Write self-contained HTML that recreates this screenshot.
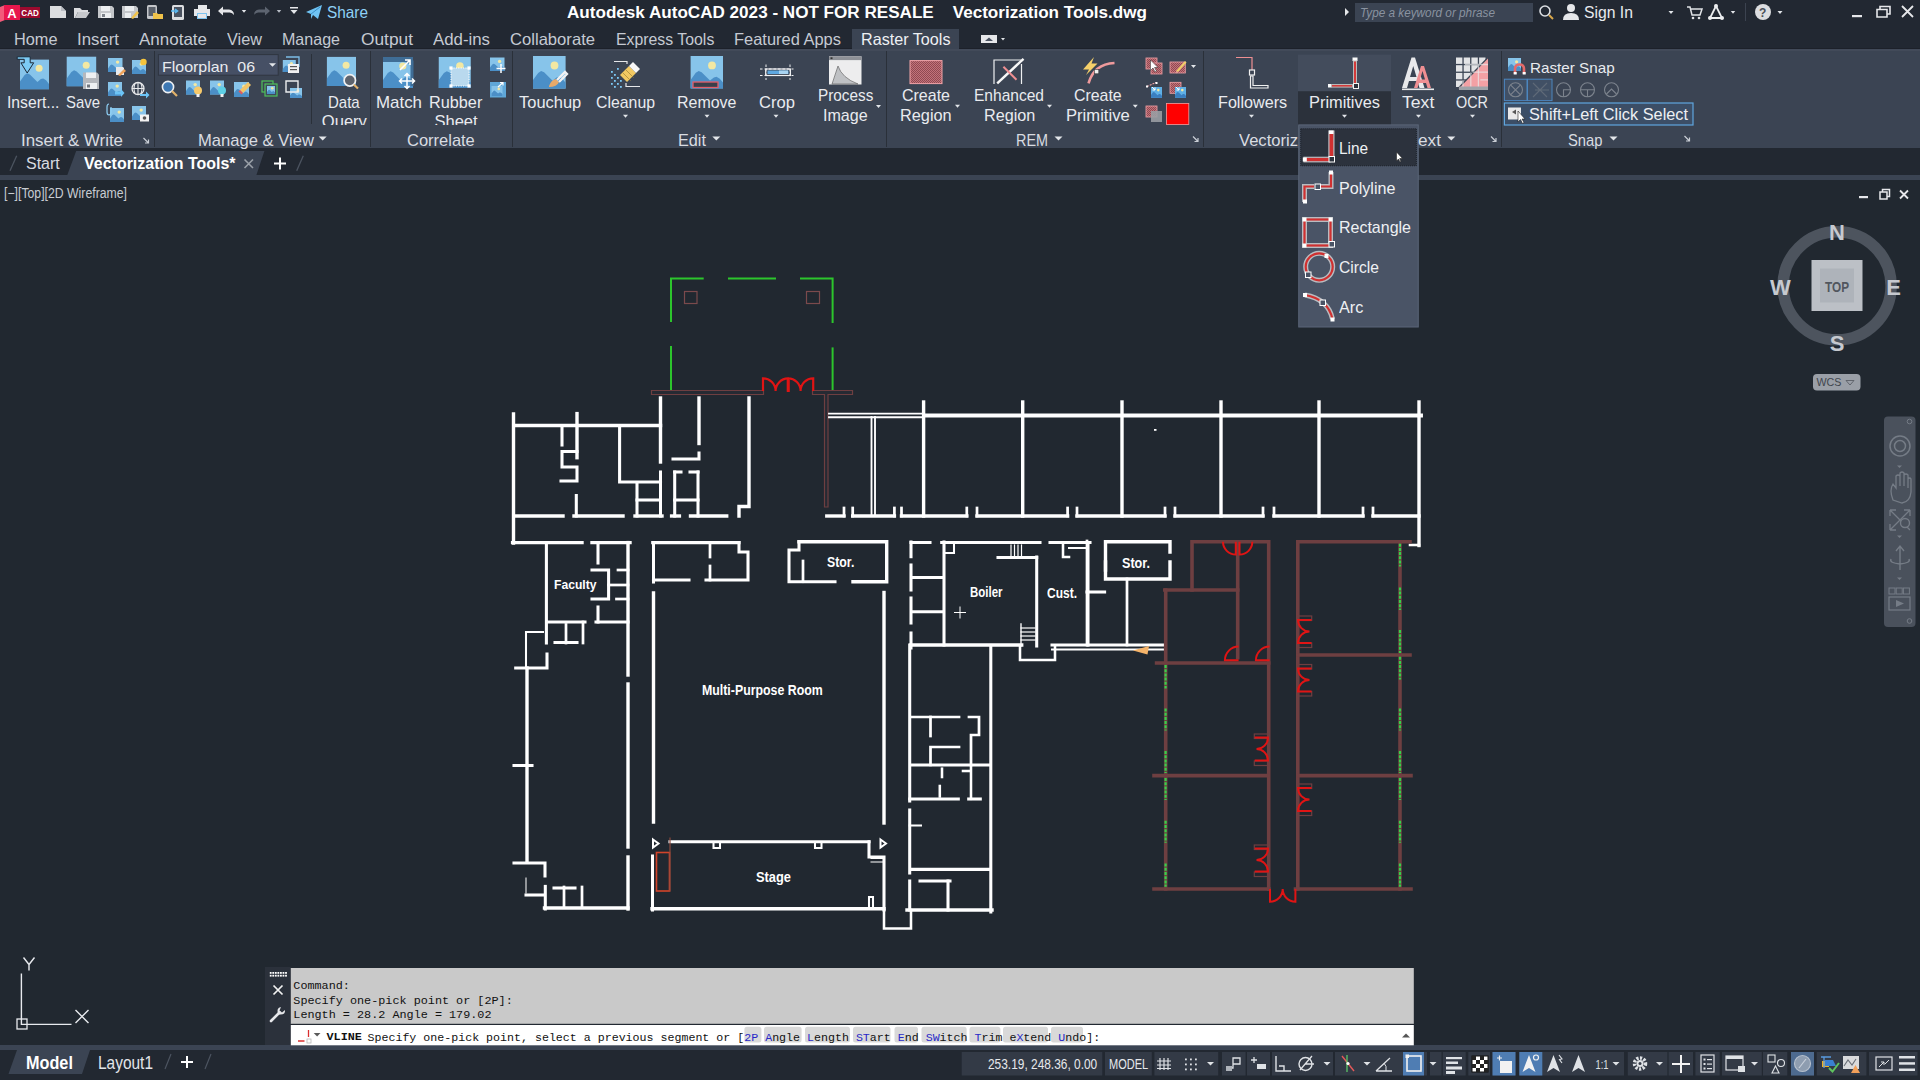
<!DOCTYPE html>
<html><head><meta charset="utf-8"><style>
html,body{margin:0;padding:0;width:1920px;height:1080px;overflow:hidden;background:#212830;}
body>div,body>svg{position:absolute;}
</style></head><body>
<div style="left:0px;top:0px;width:1920px;height:49px;background:#222832;"></div>
<div style="left:0px;top:49px;width:1920px;height:99px;background:#3b4453;"></div>
<div style="left:0px;top:47.5px;width:1920px;height:1.5px;background:#1d212a;"></div>
<div style="left:0px;top:49px;width:1920px;height:2px;background:#424a59;"></div>
<div style="left:0px;top:148px;width:1920px;height:27px;background:#222831;"></div>
<div style="left:0px;top:175px;width:1920px;height:5px;background:#3b4453;"></div>
<div style="left:0px;top:180px;width:1920px;height:866px;background:#212830;"></div>
<div style="left:0px;top:1045px;width:1920px;height:5px;background:#3b4453;"></div>
<div style="left:0px;top:1050px;width:1920px;height:30px;background:#222831;"></div>
<svg style="left:0;top:0" width="1920" height="180" viewBox="0 0 1920 180"><polygon points="0,7 5,5 5,20 0,22" fill="#f25a7a"/><rect x="4" y="5" width="16" height="15" fill="#e8174d" /><text x="7.2" y="17.5" font-family="Liberation Sans" font-weight="700" font-size="13" fill="#fff">A</text><rect x="20" y="7" width="20" height="11" fill="#9b0a2e" /><text x="21.3" y="16.3" font-family="Liberation Sans" font-weight="700" font-size="9" fill="#fff" textLength="17.5" lengthAdjust="spacingAndGlyphs">CAD</text><path d="M50 6 H61 L66 11 V18 H50 Z" stroke="none" fill="#dcdde0" stroke-width="1" /><path d="M61 6 V11 H66" stroke="none" fill="#b9bcc2" stroke-width="1" /><path d="M74 8 H80 L82 10 H88 V12 H78 L75 18 H74 Z" stroke="none" fill="#dcdde0" stroke-width="1" /><path d="M78 12 H90 L86 18 H75 Z" stroke="none" fill="#c7c9cd" stroke-width="1" /><path d="M98 6 H112 L114 8 V18 H98 Z" stroke="none" fill="#c4c6ca" stroke-width="1" /><rect x="101" y="6" width="9" height="5" fill="#eceef0" /><rect x="101" y="13" width="10" height="5" fill="#eceef0" /><rect x="102" y="14" width="3" height="3" fill="#7d828a" /><path d="M122 6 H136 L138 8 V18 H122 Z" stroke="none" fill="#c4c6ca" stroke-width="1" /><rect x="125" y="6" width="9" height="5" fill="#eceef0" /><rect x="125" y="13" width="6" height="5" fill="#eceef0" /><path d="M131 18 L137 11 L139 13 L133 19 Z" stroke="none" fill="#f0c24a" stroke-width="1" /><rect x="147" y="5" width="10" height="14" fill="#c4c6ca" rx="1.5"/><rect x="148.5" y="7" width="7" height="9" fill="#5a606a" /><path d="M153 13 H157 L158 14 H163 V19 H153 Z" stroke="none" fill="#f0c24a" stroke-width="1" /><rect x="172" y="5" width="12" height="15" fill="#dcdde0" rx="1.5"/><rect x="174" y="7" width="8" height="10" fill="#4a5260" /><path d="M171 11 H177 M175 9 L177.5 11 L175 13" stroke="#5ab8f0" fill="none" stroke-width="1.6" /><rect x="198" y="5" width="9" height="4" fill="#e6e7ea" /><rect x="194" y="9" width="16" height="7" fill="#e6e7ea" /><rect x="197" y="13" width="10" height="6" fill="#7dc4f0" /><rect x="198" y="14" width="8" height="4" fill="#e6e7ea" /><path d="M218 11 L223 6.5 V9.5 H229 Q234 10 234 15 Q232 12 229 12.5 H223 V15.5 Z" stroke="none" fill="#e6e7ea" stroke-width="1" /><polygon fill="#e3e6ea" points="241.75,10 246.25,10 244,12.8"/><path d="M270 11 L265 6.5 V9.5 H259 Q254 10 254 15 Q256 12 259 12.5 H265 V15.5 Z" stroke="none" fill="#5d6470" stroke-width="1" /><polygon fill="#b8bdc5" points="276.75,10 281.25,10 279,12.8"/><rect x="290" y="7" width="8" height="1.5" fill="#e6e7ea" /><polygon fill="#e3e6ea" points="290.5,10 297.5,10 294,14"/><path d="M306 12 L322 5 L318 19 L313 15 L311 19 L311 14 Z" stroke="none" fill="#6fc3f3" stroke-width="1" /><path d="M311 14 L320 7" stroke="#3b8fc7" fill="none" stroke-width="1" /><polygon points="1345,8 1349,12 1345,16" fill="#e6e7ea"/><circle cx="1545" cy="11" r="5" stroke="#dcdfe3" stroke-width="1.6" fill="none"/><path d="M1549 15 L1553 19" stroke="#d9a84a" fill="none" stroke-width="2" /><circle cx="1571" cy="8" r="4" fill="#e6e7ea"/><path d="M1563 20 Q1563 13 1571 13 Q1579 13 1579 20 Z" stroke="none" fill="#e6e7ea" stroke-width="1" /><polygon fill="#e3e6ea" points="1668.5,11 1673.5,11 1671,14"/><path d="M1687 7 H1690 L1692 15 H1700 L1702 9 H1691" stroke="#e0e2e6" fill="none" stroke-width="1.5" /><circle cx="1693" cy="18" r="1.3" fill="#e0e2e6"/><circle cx="1699" cy="18" r="1.3" fill="#e0e2e6"/><path d="M1716 6 L1710 18 H1722 Z" stroke="#eceef0" fill="none" stroke-width="1.8" /><circle cx="1716" cy="6" r="2" fill="#eceef0"/><circle cx="1710" cy="18" r="2" fill="#eceef0"/><circle cx="1722" cy="18" r="2" fill="#eceef0"/><polygon fill="#e3e6ea" points="1730.75,11 1735.25,11 1733,13.8"/><rect x="1745" y="3" width="1" height="18" fill="#3c4350" /><circle cx="1763" cy="12" r="8" fill="#dcdde0"/><text x="1759" y="17" font-family="Liberation Sans" font-weight="700" font-size="12" fill="#4a4f57">?</text><polygon fill="#e3e6ea" points="1777.5,11 1782.5,11 1780,14"/><rect x="1852" y="15" width="10" height="2.2" fill="#e6e7ea" /><path d="M1877 9.5 H1887 V17 H1877 Z M1880 9.5 V6.5 H1890 V14 H1887" stroke="#e6e7ea" fill="none" stroke-width="1.6" /><path d="M1902 6 L1913 17 M1913 6 L1902 17" stroke="#e6e7ea" fill="none" stroke-width="1.8" /><rect x="981" y="35" width="16" height="8" fill="#e6e7ea" /><polygon points="985,41 989,37.5 993,41" fill="#4a5260"/><polygon fill="#e3e6ea" points="1001.0,38 1005.0,38 1003,40.5"/><rect x="20" y="59.6" width="29" height="29.6" fill="#87c4ea"/><polygon fill="#4b8fc7" points="20.0,89.2 20.0,81.5 24.6,75.0 27.2,73.2 29.9,74.4 37.4,82.1 40.9,79.1 43.2,78.5 46.1,80.3 49.0,83.9 49.0,89.2"/><circle cx="39.1" cy="68.2" r="3.5" fill="#f3e8a2"/><path d="M17.2 56.8 H30.2 V62.8 H33.7 L27.2 73 L20.9 62.8 H24.2 V59.3 H17.2 Z" stroke="#1c2836" fill="#7ccbf5" stroke-width="1" /><rect x="66.7" y="56.7" width="29.5" height="29.5" fill="#87c4ea"/><polygon fill="#4b8fc7" points="66.7,86.2 66.7,78.5 71.4,72.0 74.1,70.3 76.7,71.5 84.4,79.1 87.9,76.2 90.3,75.6 93.2,77.3 96.2,80.9 96.2,86.2"/><circle cx="86.2" cy="65.3" r="3.5" fill="#f3e8a2"/><path d="M83 72.5 H97 L99 74.5 V89 H83 Z" stroke="none" fill="#b5b8bd" stroke-width="1" /><rect x="86" y="72.5" width="10" height="5.5" fill="#eef0f2" /><rect x="86" y="83" width="11" height="6" fill="#eef0f2" /><rect x="87" y="84.5" width="3" height="3" fill="#70757d" /><rect x="108" y="58" width="14.5" height="14" fill="#87c4ea"/><polygon fill="#4b8fc7" points="108.0,72.0 108.0,68.4 110.3,65.3 111.6,64.4 112.9,65.0 116.7,68.6 118.4,67.2 119.6,67.0 121.0,67.8 122.5,69.5 122.5,72.0"/><circle cx="117.6" cy="62.1" r="1.7" fill="#f3e8a2"/><path d="M116 67 H123 L124 68 V75 H116 Z" stroke="none" fill="#e9eaec" stroke-width="1" /><path d="M118 75 L124 69 L126 71 L120 76Z" stroke="none" fill="#f0a35a" stroke-width="1" /><rect x="132" y="60" width="14" height="14" fill="#87c4ea"/><polygon fill="#4b8fc7" points="132.0,74.0 132.0,70.4 134.2,67.3 135.5,66.4 136.8,67.0 140.4,70.6 142.1,69.2 143.2,69.0 144.6,69.8 146.0,71.5 146.0,74.0"/><circle cx="141.2" cy="64.1" r="1.7" fill="#f3e8a2"/><circle cx="143.5" cy="62" r="3.2" fill="#f5c43c"/><rect x="108" y="82" width="14" height="14" fill="#87c4ea"/><polygon fill="#4b8fc7" points="108.0,96.0 108.0,92.4 110.2,89.3 111.5,88.4 112.8,89.0 116.4,92.6 118.1,91.2 119.2,91.0 120.6,91.8 122.0,93.5 122.0,96.0"/><circle cx="117.2" cy="86.1" r="1.7" fill="#f3e8a2"/><path d="M115 91.5 H121 V89 L124.5 93 L121 97 V94.5 H115 Z" stroke="none" fill="#6cc4f6" stroke-width="1" /><circle cx="138" cy="88.5" r="6" fill="none" stroke="#e8e9eb" stroke-width="1.3"/><path d="M132 88.5 H144 M138 82.5 V94.5 M135 83.5 Q133 88.5 135 93.5 M141 83.5 Q143 88.5 141 93.5" stroke="#e8e9eb" fill="none" stroke-width="1.1" /><path d="M140 94 H146 V91.5 L149.5 95 L146 98.5 V96 H140 Z" stroke="none" fill="#6cc4f6" stroke-width="1" /><rect x="110" y="108" width="14" height="14" fill="#87c4ea"/><polygon fill="#4b8fc7" points="110.0,122.0 110.0,118.4 112.2,115.3 113.5,114.4 114.8,115.0 118.4,118.6 120.1,117.2 121.2,117.0 122.6,117.8 124.0,119.5 124.0,122.0"/><circle cx="119.2" cy="112.1" r="1.7" fill="#f3e8a2"/><path d="M109 104 Q107 104 107 107 V112 Q107 115 109 115 Q111 115 111 112 V107" stroke="#8fd0f6" fill="none" stroke-width="1.2" /><rect x="132" y="106" width="14" height="14" fill="#87c4ea"/><polygon fill="#4b8fc7" points="132.0,120.0 132.0,116.4 134.2,113.3 135.5,112.4 136.8,113.0 140.4,116.6 142.1,115.2 143.2,115.0 144.6,115.8 146.0,117.5 146.0,120.0"/><circle cx="141.2" cy="110.1" r="1.7" fill="#f3e8a2"/><rect x="140" y="114.5" width="9" height="7" fill="#f3f3f3" /><circle cx="144.5" cy="118" r="1.8" fill="#555"/><path d="M143.5 138 L148.5 143 M148.5 139.5 V143 H145.0" stroke="#c9ced6" fill="none" stroke-width="1.2" /><rect x="158.4" y="54.6" width="119.8" height="20.6" fill="#465065" stroke="#2f3541" stroke-width="1"/><polygon fill="#e3e6ea" points="269.0,63.2 276.0,63.2 272.5,66.8"/><rect x="282.8" y="60" width="13" height="12" fill="#87c4ea"/><polygon fill="#4b8fc7" points="282.8,72.0 282.8,68.9 284.9,66.2 286.1,65.5 287.2,66.0 290.6,69.1 292.2,67.9 293.2,67.7 294.5,68.4 295.8,69.8 295.8,72.0"/><circle cx="291.4" cy="63.5" r="1.6" fill="#f3e8a2"/><path d="M286 57 H299 V67" stroke="#7cbce6" fill="none" stroke-width="1.3" /><rect x="288" y="64" width="11" height="9" fill="#f0f0f0" /><rect x="290" y="66" width="7" height="1.2" fill="#555" /><rect x="290" y="69" width="7" height="1.2" fill="#555" /><circle cx="168" cy="87" r="5.6" fill="#3e78b3" stroke="#eef0f2" stroke-width="1.6"/><path d="M172 91 L177 96" stroke="#e3b36a" fill="none" stroke-width="2.2" /><rect x="186" y="80.5" width="14" height="14" fill="#87c4ea"/><polygon fill="#4b8fc7" points="186.0,94.5 186.0,90.9 188.2,87.8 189.5,86.9 190.8,87.5 194.4,91.1 196.1,89.7 197.2,89.5 198.6,90.3 200.0,92.0 200.0,94.5"/><circle cx="195.2" cy="84.6" r="1.7" fill="#f3e8a2"/><circle cx="198" cy="90.5" r="4" fill="#f6c96a"/><rect x="196.5" y="94" width="3" height="3" fill="#f0f0f0" /><rect x="210" y="80.5" width="14" height="14" fill="#87c4ea"/><polygon fill="#4b8fc7" points="210.0,94.5 210.0,90.9 212.2,87.8 213.5,86.9 214.8,87.5 218.4,91.1 220.1,89.7 221.2,89.5 222.6,90.3 224.0,92.0 224.0,94.5"/><circle cx="219.2" cy="84.6" r="1.7" fill="#f3e8a2"/><circle cx="222" cy="90.5" r="4" fill="#5ed0e6"/><rect x="220.5" y="94" width="3" height="3" fill="#f0f0f0" /><rect x="234" y="82" width="15" height="15" fill="#87c4ea"/><polygon fill="#4b8fc7" points="234.0,97.0 234.0,93.1 236.4,89.8 237.8,88.9 239.1,89.5 243.0,93.4 244.8,91.9 246.0,91.6 247.5,92.5 249.0,94.3 249.0,97.0"/><circle cx="243.9" cy="86.3" r="1.8" fill="#f3e8a2"/><path d="M240 90 L248 82 L251 85 L243 93 Z" stroke="none" fill="#f2c466" stroke-width="1" /><path d="M240 90 L243 93 L241.5 94.5 L238.5 91.5Z" stroke="none" fill="#e35a5a" stroke-width="1" /><rect x="262" y="81" width="11" height="11" fill="none" stroke="#4fc05a" stroke-width="1.2"/><rect x="265" y="84" width="12" height="12" fill="#3f4a5c" stroke="#4fc05a" stroke-width="1.2"/><rect x="267" y="86" width="8" height="8" fill="#87c4ea"/><polygon fill="#4b8fc7" points="267.0,94.0 267.0,91.9 268.3,90.2 269.0,89.7 269.7,90.0 271.8,92.1 272.8,91.3 273.4,91.1 274.2,91.6 275.0,92.6 275.0,94.0"/><circle cx="272.3" cy="88.3" r="1.3" fill="#f3e8a2"/><rect x="290" y="88" width="12" height="10" fill="#87c4ea"/><polygon fill="#4b8fc7" points="290.0,98.0 290.0,95.4 291.9,93.2 293.0,92.6 294.1,93.0 297.2,95.6 298.6,94.6 299.6,94.4 300.8,95.0 302.0,96.2 302.0,98.0"/><circle cx="297.9" cy="90.9" r="1.4" fill="#f3e8a2"/><path d="M286 81 H298 V92 H286 Z" stroke="#ecedef" fill="none" stroke-width="1.4" /><rect x="326.9" y="56.9" width="29.1" height="29.1" fill="#87c4ea"/><polygon fill="#4b8fc7" points="326.9,86.0 326.9,78.4 331.6,72.0 334.2,70.3 336.8,71.5 344.4,79.0 347.9,76.1 350.2,75.5 353.1,77.3 356.0,80.8 356.0,86.0"/><circle cx="346.1" cy="65.3" r="3.5" fill="#f3e8a2"/><circle cx="349.8" cy="80.4" r="5.7" fill="#5d636d" stroke="#f0f1f2" stroke-width="1.7"/><path d="M353.8 84.5 L358 88.5" stroke="#e0b06a" fill="none" stroke-width="2.2" /><polygon fill="#e3e6ea" points="318.7,136.5 326.7,136.5 322.7,140.5"/><rect x="383" y="57" width="30" height="31" fill="#87c4ea"/><polygon fill="#4b8fc7" points="383.0,88.0 383.0,79.9 387.8,73.1 390.5,71.3 393.2,72.5 401.0,80.6 404.6,77.5 407.0,76.8 410.0,78.7 413.0,82.4 413.0,88.0"/><circle cx="402.8" cy="66.0" r="3.6" fill="#f3e8a2"/><rect x="383" y="57" width="30" height="5" fill="#3f6d96" /><path d="M406 62 H412 V86" stroke="#3f6d96" fill="none" stroke-width="3" /><path d="M400 70 L410 60 M405 60 H410 V65" stroke="#ffffff" fill="none" stroke-width="1.6" /><path d="M407 74 V88 M400 81 H414 M404.5 76 L407 73.5 L409.5 76 M404.5 86 L407 88.5 L409.5 86 M402 78.5 L399.5 81 L402 83.5 M412 78.5 L414.5 81 L412 83.5" stroke="#ffffff" fill="none" stroke-width="1.5" /><rect x="438.75" y="57" width="32" height="31" fill="#87c4ea"/><polygon fill="#4b8fc7" points="438.8,88.0 438.8,79.9 443.9,73.1 446.8,71.3 449.6,72.5 457.9,80.6 461.8,77.5 464.4,76.8 467.6,78.7 470.8,82.4 470.8,88.0"/><circle cx="459.9" cy="66.0" r="3.8" fill="#f3e8a2"/><rect x="451" y="68" width="18" height="18" fill="#b9d9ee" stroke="#ffffff" stroke-width="1" stroke-dasharray="1.2 1.2"/><rect x="449.4" y="66.4" width="3.2" height="3.2" fill="#ffffff" /><rect x="467.4" y="66.4" width="3.2" height="3.2" fill="#ffffff" /><rect x="449.4" y="84.4" width="3.2" height="3.2" fill="#ffffff" /><rect x="467.4" y="84.4" width="3.2" height="3.2" fill="#ffffff" /><rect x="490" y="57.5" width="14.5" height="13.5" fill="#87c4ea"/><polygon fill="#4b8fc7" points="490.0,71.0 490.0,67.5 492.3,64.5 493.6,63.7 494.9,64.2 498.7,67.8 500.4,66.4 501.6,66.1 503.1,67.0 504.5,68.6 504.5,71.0"/><circle cx="499.6" cy="61.4" r="1.7" fill="#f3e8a2"/><path d="M501 64 V73 M496.5 68.5 H505.5" stroke="#fff" fill="none" stroke-width="1.5" /><rect x="490" y="82" width="16" height="15.5" fill="#5fa7d8" /><rect x="491.5" y="86" width="11" height="10" fill="#87c4ea"/><polygon fill="#4b8fc7" points="491.5,96.0 491.5,93.4 493.3,91.2 494.2,90.6 495.2,91.0 498.1,93.6 499.4,92.6 500.3,92.4 501.4,93.0 502.5,94.2 502.5,96.0"/><circle cx="498.8" cy="88.9" r="1.3" fill="#f3e8a2"/><path d="M498 87 L503 82.5 M500 82.5 H503 V85.5" stroke="#fff" fill="none" stroke-width="1.2" /><rect x="533" y="56" width="32.6" height="32.6" fill="#87c4ea"/><polygon fill="#4b8fc7" points="533.0,88.6 533.0,80.1 538.2,73.0 541.1,71.0 544.1,72.3 552.6,80.8 556.5,77.5 559.1,76.9 562.3,78.8 565.6,82.7 565.6,88.6"/><circle cx="554.5" cy="65.5" r="3.9" fill="#f3e8a2"/><path d="M549 86 Q551 80 556 79 L559 82 Q557 87 549 87 Z" stroke="none" fill="#e7a96a" stroke-width="1" /><path d="M557 80 L565 72 L567 74 L559 82" stroke="#f2f2f2" fill="none" stroke-width="2.3" /><rect x="611" y="71" width="1.8" height="1.8" fill="#7cc8f4" /><rect x="614" y="74" width="1.8" height="1.8" fill="#7cc8f4" /><rect x="611" y="77" width="1.8" height="1.8" fill="#7cc8f4" /><rect x="614" y="80" width="1.8" height="1.8" fill="#7cc8f4" /><rect x="611" y="83" width="1.8" height="1.8" fill="#7cc8f4" /><rect x="617" y="77" width="1.8" height="1.8" fill="#7cc8f4" /><rect x="617" y="83" width="1.8" height="1.8" fill="#7cc8f4" /><rect x="614" y="86" width="1.8" height="1.8" fill="#7cc8f4" /><rect x="620" y="80" width="1.8" height="1.8" fill="#7cc8f4" /><rect x="620" y="86" width="1.8" height="1.8" fill="#7cc8f4" /><rect x="617" y="68" width="1.8" height="1.8" fill="#7cc8f4" /><path d="M614 61.5 H627 V64 M626 83 V86.5 H640" stroke="#e6e7ea" fill="none" stroke-width="1.2" /><path d="M620 75 L629 66 L636 73 L627 82 Z" stroke="none" fill="#f2c962" stroke-width="1" /><path d="M629 66 L633 62 L640 69 L636 73 Z" stroke="none" fill="#f7f7f7" stroke-width="1" /><path d="M622.5 72.5 L630.5 80.5 M625.5 69.5 L633.5 77.5" stroke="#a78b3a" fill="none" stroke-width="0.8" /><rect x="690.6" y="56" width="32.4" height="32.4" fill="#87c4ea"/><polygon fill="#4b8fc7" points="690.6,88.4 690.6,80.0 695.8,72.8 698.7,70.9 701.6,72.2 710.0,80.6 713.9,77.4 716.5,76.7 719.8,78.7 723.0,82.6 723.0,88.4"/><circle cx="712.0" cy="65.4" r="3.9" fill="#f3e8a2"/><rect x="693" y="82" width="25" height="5.5" fill="#3a3f4a" stroke="#e35f6a" stroke-width="1.3"/><polygon fill="#e3e6ea" points="623.0,114.7 628.0,114.7 625.5,117.7"/><polygon fill="#e3e6ea" points="704.5,114.7 709.5,114.7 707,117.7"/><polygon fill="#e3e6ea" points="773.5,114.7 778.5,114.7 776,117.7"/><rect x="765.7" y="69" width="24.7" height="6.5" fill="none" stroke="#f0f1f3" stroke-width="1.2"/><rect x="767.5" y="70.5" width="21" height="3.5" fill="#5fa8e0" /><rect x="779" y="70.5" width="9" height="3.5" fill="#a9d4f2" /><path d="M766 64.5 V80 M790 64.5 V80 M760 69 H793.5 M760 75.5 H793.5" stroke="#f0f1f3" fill="none" stroke-width="1" stroke-dasharray="2.5 2"/><rect x="829" y="56.3" width="32.5" height="28.2" fill="#ededee" /><rect x="829" y="56.3" width="32.5" height="3.8" fill="#8d9096" /><rect x="830.5" y="57.3" width="2" height="1.8" fill="#333" /><path d="M832 84 L838 66 Q842 78 858 84 Z" stroke="#555" fill="#bfc1c4" stroke-width="0.6" /><polygon fill="#e3e6ea" points="876.0,105 881.0,105 878.5,108"/><path d="M1193 136.5 L1198 141.5 M1198 138.0 V141.5 H1194.5" stroke="#c9ced6" fill="none" stroke-width="1.2" /><defs><pattern id="chk" width="2" height="2" patternUnits="userSpaceOnUse"><rect width="2" height="2" fill="#c4727a"/><rect width="1" height="1" fill="#8f4a52"/><rect x="1" y="1" width="1" height="1" fill="#8f4a52"/></pattern></defs><rect x="910" y="60.6" width="32" height="23" fill="url(#chk)" stroke="#f2a4a8" stroke-width="1"/><path d="M994 84 V60 H1021.5 M1021.5 64 V84" stroke="#eef0f2" fill="none" stroke-width="1.2" /><path d="M997.2 83.3 L1023.5 58.9" stroke="#f7f7f7" fill="none" stroke-width="2.4" /><path d="M1003.4 66.7 L1016.5 79.7" stroke="#ef8f92" fill="none" stroke-width="2" /><polygon fill="#e3e6ea" points="955.0,104.7 960.0,104.7 957.5,107.7"/><polygon fill="#e3e6ea" points="1047.0,104.7 1052.0,104.7 1049.5,107.7"/><polygon fill="#e3e6ea" points="1132.8,104.7 1137.8,104.7 1135.3,107.7"/><path d="M1088.5 83.3 Q1094 64 1114.5 63" stroke="#ef9a9c" fill="none" stroke-width="2.6" /><path d="M1094 57 L1083 69.5 H1089 L1086 75 L1097.5 63.5 H1091.5 Z" stroke="none" fill="#f5d06a" stroke-width="1" /><rect x="1094.3" y="69.3" width="4.5" height="4.5" fill="#f0f0f0" stroke="#333" stroke-width="0.6"/><rect x="1146" y="58" width="11" height="11" fill="url(#chk)" stroke="#f2a4a8" stroke-width="0.8"/><rect x="1151" y="63" width="11" height="11" fill="url(#chk)" stroke="#f2a4a8" stroke-width="0.8"/><path d="M1150.5 60 V70.5 L1153 68 L1155 72 L1156.5 71 L1154.5 67.5 H1158 Z" stroke="#222" fill="#ffffff" stroke-width="0.5" /><rect x="1170" y="62" width="15.3" height="11" fill="url(#chk)" stroke="#f2a4a8" stroke-width="0.8"/><path d="M1176 71 L1185 61 L1186.5 62.5 L1178 72 Z" stroke="none" fill="#f2d06a" stroke-width="1" /><path d="M1176 71 L1178 72 L1176.5 73.5Z" stroke="none" fill="#e9a7a0" stroke-width="1" /><polygon fill="#e3e6ea" points="1191.0,65 1196.0,65 1193.5,68"/><path d="M1147 86.5 L1156 82.5" stroke="#f2a4a8" fill="none" stroke-width="1.2" stroke-dasharray="2 1"/><rect x="1146" y="85.5" width="2" height="2" fill="#fff" /><rect x="1155.5" y="82" width="2" height="2" fill="#fff" /><rect x="1151" y="87" width="11" height="10.8" fill="#5fb0e6"/><polygon fill="#3a7fc0" points="1151.0,97.8 1151.0,95.0 1152.8,92.6 1153.8,92.0 1154.7,92.4 1157.6,95.2 1158.9,94.1 1159.8,93.9 1160.9,94.6 1162.0,95.9 1162.0,97.8"/><circle cx="1158.3" cy="90.1" r="1.3" fill="#f3e8a2"/><path d="M1152 87 L1155 90 M1152.5 90 H1155 V87.5" stroke="#fff" fill="none" stroke-width="1" /><rect x="1170" y="82.3" width="11" height="11" fill="url(#chk)" stroke="#f2a4a8" stroke-width="0.8"/><rect x="1175" y="87" width="11" height="10.8" fill="#5fb0e6"/><polygon fill="#3a7fc0" points="1175.0,97.8 1175.0,95.0 1176.8,92.6 1177.8,92.0 1178.7,92.4 1181.6,95.2 1182.9,94.1 1183.8,93.9 1184.9,94.6 1186.0,95.9 1186.0,97.8"/><circle cx="1182.3" cy="90.1" r="1.3" fill="#f3e8a2"/><path d="M1176 87 L1179 90 M1176.5 90 H1179 V87.5" stroke="#fff" fill="none" stroke-width="1" /><rect x="1146" y="106" width="11" height="11" fill="url(#chk)" stroke="#f2a4a8" stroke-width="0.8"/><rect x="1151" y="111" width="11" height="11" fill="#9a9da3" opacity="0.9"/><rect x="1166.5" y="103.5" width="22.3" height="21" fill="#ff0000" stroke="#f59a9a" stroke-width="0.8"/><path d="M1236 57.5 H1252 V70" stroke="#ef8f92" fill="none" stroke-width="1.2" /><rect x="1249.5" y="70" width="5" height="5" fill="none" stroke="#f0f0f0" stroke-width="1.2"/><path d="M1250.5 76 V88 H1268 V85.5 H1253 V76 Z" stroke="#f0f0f0" fill="none" stroke-width="1.2" /><polygon fill="#e3e6ea" points="1249.0,114.7 1254.0,114.7 1251.5,117.7"/><rect x="1298" y="54.7" width="93" height="36.6" fill="#434c5c" /><rect x="1298" y="91.3" width="93" height="34.2" fill="#2b313b" /><rect x="1352.5" y="57.5" width="5" height="3.5" fill="#fafafa" /><rect x="1353.5" y="61" width="3" height="23" fill="#d23a3a" stroke="#b9b9b9" stroke-width="1"/><rect x="1328" y="84" width="3.5" height="3.5" fill="#fafafa" /><rect x="1331.5" y="84.5" width="21" height="2.6" fill="#d23a3a" stroke="#b9b9b9" stroke-width="1"/><rect x="1353.5" y="83.5" width="5" height="5" fill="#2b313b" stroke="#f2f2f2" stroke-width="1"/><polygon fill="#e3e6ea" points="1342.0,114.7 1347.0,114.7 1344.5,117.7"/><path d="M1402 88 L1411.5 57.5 H1415 L1424.5 88 H1419.5 L1417.5 81 H1409 L1407 88 Z M1410 77 H1416.5 L1413.25 66 Z" stroke="none" fill="#e8e9eb" stroke-width="1" /><path d="M1414 88 L1421 66 H1424 L1431 88 H1427.5 L1426 83 H1419 L1417.5 88 Z M1420 79.5 H1425 L1422.5 71 Z" stroke="none" fill="#ef8f92" stroke-width="1" /><rect x="1402" y="88.5" width="32" height="1.6" fill="#e8e9eb" /><polygon fill="#e3e6ea" points="1416.0,114.7 1421.0,114.7 1418.5,117.7"/><rect x="1456.0" y="57.5" width="6.4" height="6.4" fill="#e3e4e6"/><rect x="1456.0" y="65.2" width="6.4" height="6.4" fill="#e3e4e6"/><rect x="1456.0" y="72.9" width="6.4" height="6.4" fill="#e3e4e6"/><rect x="1456.0" y="80.6" width="6.4" height="6.4" fill="#e3e4e6"/><rect x="1463.7" y="57.5" width="6.4" height="6.4" fill="#e3e4e6"/><rect x="1463.7" y="65.2" width="6.4" height="6.4" fill="#e3e4e6"/><rect x="1463.7" y="72.9" width="6.4" height="6.4" fill="#e3e4e6"/><rect x="1463.7" y="80.6" width="6.4" height="6.4" fill="#e3e4e6"/><rect x="1471.4" y="57.5" width="6.4" height="6.4" fill="#e3e4e6"/><rect x="1471.4" y="65.2" width="6.4" height="6.4" fill="#e3e4e6"/><rect x="1471.4" y="72.9" width="6.4" height="6.4" fill="#e3e4e6"/><rect x="1471.4" y="80.6" width="6.4" height="6.4" fill="#e3e4e6"/><rect x="1479.1" y="57.5" width="6.4" height="6.4" fill="#e3e4e6"/><rect x="1479.1" y="65.2" width="6.4" height="6.4" fill="#e3e4e6"/><rect x="1479.1" y="72.9" width="6.4" height="6.4" fill="#e3e4e6"/><rect x="1479.1" y="80.6" width="6.4" height="6.4" fill="#e3e4e6"/><path d="M1488 57.5 L1458 88.5 H1488 Z" stroke="none" fill="#f3a0a4" stroke-width="1" /><path d="M1488 57.5 L1458 88.5" stroke="#3b4453" fill="none" stroke-width="1.2" /><path d="M1463.0 88 V80.3 M1488 64.5 H1464.9" stroke="#e8e9eb" fill="none" stroke-width="1.3" opacity="0.7"/><path d="M1470.8 88 V72.6 M1488 72.2 H1472.6" stroke="#e8e9eb" fill="none" stroke-width="1.3" opacity="0.7"/><path d="M1478.4 88 V64.9 M1488 79.9 H1480.3" stroke="#e8e9eb" fill="none" stroke-width="1.3" opacity="0.7"/><rect x="1459" y="86.5" width="29" height="3.5" fill="#9fa3a9" /><polygon fill="#e3e6ea" points="1470.0,114.7 1475.0,114.7 1472.5,117.7"/><path d="M1491 136.5 L1496 141.5 M1496 138.0 V141.5 H1492.5" stroke="#c9ced6" fill="none" stroke-width="1.2" /><rect x="1508" y="58" width="13" height="13" fill="#87c4ea"/><polygon fill="#4b8fc7" points="1508.0,71.0 1508.0,67.6 1510.1,64.8 1511.2,64.0 1512.4,64.5 1515.8,67.9 1517.4,66.6 1518.4,66.3 1519.7,67.1 1521.0,68.7 1521.0,71.0"/><circle cx="1516.6" cy="61.8" r="1.6" fill="#f3e8a2"/><path d="M1515 74 V69 Q1515 64.5 1519.5 64.5 Q1524 64.5 1524 69 V74" stroke="#e46a6a" fill="none" stroke-width="2.6" /><rect x="1513.7" y="72" width="3" height="2.5" fill="#fff" /><rect x="1522.7" y="72" width="3" height="2.5" fill="#fff" /><rect x="1504.4" y="79.2" width="22.6" height="21.4" fill="#415065" stroke="#4c86bf" stroke-width="1"/><rect x="1527.5" y="79.2" width="24.5" height="21.4" fill="#415065" stroke="#4c86bf" stroke-width="1"/><circle cx="1515.5" cy="89.8" r="7" fill="none" stroke="#7c838d" stroke-width="1.1"/><path d="M1510.5 84.8 L1520.5 94.8 M1520.5 84.8 L1510.5 94.8" stroke="#7c838d" fill="none" stroke-width="1.1" /><path d="M1533 83 L1547 97 M1547 83 L1533 97 M1535 90 H1549" stroke="#5f6a78" fill="none" stroke-width="1.1" /><circle cx="1563.5" cy="89.8" r="7" fill="none" stroke="#7c838d" stroke-width="1.1"/><circle cx="1587.5" cy="89.8" r="7" fill="none" stroke="#7c838d" stroke-width="1.1"/><circle cx="1611.5" cy="89.8" r="7" fill="none" stroke="#7c838d" stroke-width="1.1"/><path d="M1563.5 96.8 V89.8 H1570.5" stroke="#7c838d" fill="none" stroke-width="1.1" /><path d="M1580.5 89.8 H1594.5 M1587.5 89.8 V96.8" stroke="#7c838d" fill="none" stroke-width="1.1" /><path d="M1606.5 94 L1611.5 89 L1616.5 94" stroke="#7c838d" fill="none" stroke-width="1.1" /><rect x="1504.4" y="103" width="188.6" height="22" fill="#3c4e66" stroke="#5fa6de" stroke-width="1.2"/><rect x="1508" y="107.5" width="13" height="12" fill="#e9e9ea" /><path d="M1512 112 L1516 109.5 V114.5 Z" stroke="none" fill="#555" stroke-width="1" /><path d="M1518 111 V122 L1520.5 119.5 L1522.5 123.5 L1524 122.5 L1522 119 H1525 Z" stroke="#222" fill="#ffffff" stroke-width="0.6" /><polygon fill="#e3e6ea" points="1609.5,136.5 1617.5,136.5 1613.5,140.5"/><path d="M1684.5 136 L1689.5 141 M1689.5 137.5 V141 H1686.0" stroke="#c9ced6" fill="none" stroke-width="1.2" /><polygon fill="#e3e6ea" points="712.3,136.5 720.3,136.5 716.3,140.5"/><polygon fill="#e3e6ea" points="1054.5,136.5 1062.5,136.5 1058.5,140.5"/><polygon fill="#e3e6ea" points="1447.3,136.5 1455.3,136.5 1451.3,140.5"/></svg>
<div style="left:1355px;top:3px;width:178px;height:19px;background:#3b4453;"></div>
<div style="left:852px;top:29px;width:107px;height:20px;background:#3b4453;"></div>
<div style="left:154px;top:51px;width:1px;height:96px;background:#2a3039;"></div>
<div style="left:370px;top:51px;width:1px;height:96px;background:#2a3039;"></div>
<div style="left:512px;top:51px;width:1px;height:96px;background:#2a3039;"></div>
<div style="left:886px;top:51px;width:1px;height:96px;background:#2a3039;"></div>
<div style="left:1203px;top:51px;width:1px;height:96px;background:#2a3039;"></div>
<div style="left:1501px;top:51px;width:1px;height:96px;background:#2a3039;"></div>
<div style="left:311px;top:54px;width:1px;height:70px;background:#2a3039;"></div>
<svg style="left:0;top:0" width="1920" height="1080" viewBox="0 0 1920 1080"><path d="M703.7,278.5 L671,278.5 L671,322" stroke="#2cc52c" stroke-width="2" fill="none"/><path d="M728,278.5 L776,278.5" stroke="#2cc52c" stroke-width="2" fill="none"/><path d="M800,278.5 L832.6,278.5 L832.6,323" stroke="#2cc52c" stroke-width="2" fill="none"/><path d="M671,346 L671,390" stroke="#2cc52c" stroke-width="2" fill="none"/><path d="M832.6,347.4 L832.6,390" stroke="#2cc52c" stroke-width="2" fill="none"/><rect x="684.5" y="291.5" width="12.5" height="12" stroke="#7b4a4c" stroke-width="1.2" fill="none"/><rect x="806.5" y="291.5" width="13" height="12" stroke="#7b4a4c" stroke-width="1.2" fill="none"/><path d="M651.5 390.5 H763.5 V394.5 H651.5 Z M812.5 390.5 H852.5 V394.5 H828 V507 H824.5 V394.5 H812.5 Z" stroke="#6e3f41" stroke-width="1.2" fill="#262a33"/><path d="M763 391 V378.4 A12.6 12.6 0 0 1 775.6 391 A12.6 12.6 0 0 1 788 378.4 V391 M788 378.4 A12.6 12.6 0 0 1 800.6 391 A12.6 12.6 0 0 1 813.2 378.4 V391" stroke="#e01414" stroke-width="2.2" fill="none"/><path d="M787.5 380 V392 M789 380 V392" stroke="#e01414" stroke-width="1.5" fill="none"/><path d="M513.5,414 L513.5,543" stroke="#ffffff" stroke-width="3.40" fill="none" stroke-linecap="square" stroke-linejoin="miter"/><path d="M514,425.5 L660.5,425.5" stroke="#ffffff" stroke-width="3.40" fill="none" stroke-linecap="square" stroke-linejoin="miter"/><path d="M577,413.6 L577,457.7" stroke="#ffffff" stroke-width="3.40" fill="none" stroke-linecap="square" stroke-linejoin="miter"/><path d="M660.5,398 L660.5,462" stroke="#ffffff" stroke-width="3.40" fill="none" stroke-linecap="square" stroke-linejoin="miter"/><path d="M699,398 L699,443.5" stroke="#ffffff" stroke-width="3.40" fill="none" stroke-linecap="square" stroke-linejoin="miter"/><path d="M749,398 L749,506.5 L739,506.5 L739,516" stroke="#ffffff" stroke-width="3.40" fill="none" stroke-linecap="square" stroke-linejoin="miter"/><path d="M514,516 L563,516" stroke="#ffffff" stroke-width="3.40" fill="none" stroke-linecap="square" stroke-linejoin="miter"/><path d="M574,516 L623,516" stroke="#ffffff" stroke-width="3.40" fill="none" stroke-linecap="square" stroke-linejoin="miter"/><path d="M635,516 L662,516" stroke="#ffffff" stroke-width="3.40" fill="none" stroke-linecap="square" stroke-linejoin="miter"/><path d="M671.6,516 L679.4,516" stroke="#ffffff" stroke-width="3.40" fill="none" stroke-linecap="square" stroke-linejoin="miter"/><path d="M690.5,516 L726.7,516" stroke="#ffffff" stroke-width="3.40" fill="none" stroke-linecap="square" stroke-linejoin="miter"/><path d="M562,427 L562,445" stroke="#ffffff" stroke-width="3.06" fill="none" stroke-linecap="square" stroke-linejoin="miter"/><path d="M577,451.5 L562,451.5 L562,467 L577,467 L577,481 L561,481" stroke="#ffffff" stroke-width="3.06" fill="none" stroke-linecap="square" stroke-linejoin="miter"/><path d="M576.3,495.5 L576.3,516" stroke="#ffffff" stroke-width="3.06" fill="none" stroke-linecap="square" stroke-linejoin="miter"/><path d="M619.6,427 L619.6,482 L660.5,482" stroke="#ffffff" stroke-width="3.06" fill="none" stroke-linecap="square" stroke-linejoin="miter"/><path d="M637,483 L637,516" stroke="#ffffff" stroke-width="3.06" fill="none" stroke-linecap="square" stroke-linejoin="miter"/><path d="M660.5,472 L660.5,516" stroke="#ffffff" stroke-width="3.06" fill="none" stroke-linecap="square" stroke-linejoin="miter"/><path d="M637,500 L660.5,500" stroke="#ffffff" stroke-width="3.06" fill="none" stroke-linecap="square" stroke-linejoin="miter"/><path d="M674.7,472 L674.7,516" stroke="#ffffff" stroke-width="3.06" fill="none" stroke-linecap="square" stroke-linejoin="miter"/><path d="M698,472 L698,516" stroke="#ffffff" stroke-width="3.06" fill="none" stroke-linecap="square" stroke-linejoin="miter"/><path d="M674.7,472 L681,472" stroke="#ffffff" stroke-width="3.06" fill="none" stroke-linecap="square" stroke-linejoin="miter"/><path d="M690,472 L698,472" stroke="#ffffff" stroke-width="3.06" fill="none" stroke-linecap="square" stroke-linejoin="miter"/><path d="M674.7,500 L698,500" stroke="#ffffff" stroke-width="3.06" fill="none" stroke-linecap="square" stroke-linejoin="miter"/><path d="M673,459 L699,459 L699,453" stroke="#ffffff" stroke-width="3.06" fill="none" stroke-linecap="square" stroke-linejoin="miter"/><path d="M829,413.6 L924,413.6" stroke="#ffffff" stroke-width="1.87" fill="none" stroke-linecap="square" stroke-linejoin="miter"/><path d="M829,417.2 L924,417.2" stroke="#ffffff" stroke-width="1.87" fill="none" stroke-linecap="square" stroke-linejoin="miter"/><path d="M924,415.5 L1421,415.5" stroke="#ffffff" stroke-width="3.91" fill="none" stroke-linecap="square" stroke-linejoin="miter"/><path d="M871.5,417 L871.5,516" stroke="#ffffff" stroke-width="1.87" fill="none" stroke-linecap="square" stroke-linejoin="miter"/><path d="M875,417 L875,516" stroke="#ffffff" stroke-width="1.87" fill="none" stroke-linecap="square" stroke-linejoin="miter"/><path d="M923.6,402 L923.6,516" stroke="#ffffff" stroke-width="3.40" fill="none" stroke-linecap="square" stroke-linejoin="miter"/><path d="M1022.7,402 L1022.7,516" stroke="#ffffff" stroke-width="3.40" fill="none" stroke-linecap="square" stroke-linejoin="miter"/><path d="M1122,402 L1122,516" stroke="#ffffff" stroke-width="3.40" fill="none" stroke-linecap="square" stroke-linejoin="miter"/><path d="M1221,402 L1221,516" stroke="#ffffff" stroke-width="3.40" fill="none" stroke-linecap="square" stroke-linejoin="miter"/><path d="M1319,402 L1319,516" stroke="#ffffff" stroke-width="3.40" fill="none" stroke-linecap="square" stroke-linejoin="miter"/><path d="M1419,402 L1419,545.5" stroke="#ffffff" stroke-width="3.40" fill="none" stroke-linecap="square" stroke-linejoin="miter"/><path d="M1410,545 L1419,545" stroke="#ffffff" stroke-width="2.55" fill="none" stroke-linecap="square" stroke-linejoin="miter"/><path d="M826.8,516 L844,516" stroke="#ffffff" stroke-width="3.40" fill="none" stroke-linecap="square" stroke-linejoin="miter"/><path d="M852.7,516 L894.4,516" stroke="#ffffff" stroke-width="3.40" fill="none" stroke-linecap="square" stroke-linejoin="miter"/><path d="M901.5,516 L966.8,516" stroke="#ffffff" stroke-width="3.40" fill="none" stroke-linecap="square" stroke-linejoin="miter"/><path d="M977,516 L1067.6,516" stroke="#ffffff" stroke-width="3.40" fill="none" stroke-linecap="square" stroke-linejoin="miter"/><path d="M1077,516 L1165,516" stroke="#ffffff" stroke-width="3.40" fill="none" stroke-linecap="square" stroke-linejoin="miter"/><path d="M1175,516 L1263,516" stroke="#ffffff" stroke-width="3.40" fill="none" stroke-linecap="square" stroke-linejoin="miter"/><path d="M1274,516 L1363,516" stroke="#ffffff" stroke-width="3.40" fill="none" stroke-linecap="square" stroke-linejoin="miter"/><path d="M1373,516 L1419,516" stroke="#ffffff" stroke-width="3.40" fill="none" stroke-linecap="square" stroke-linejoin="miter"/><path d="M844,508 L844,516" stroke="#ffffff" stroke-width="2.72" fill="none" stroke-linecap="square" stroke-linejoin="miter"/><path d="M852.7,508 L852.7,516" stroke="#ffffff" stroke-width="2.72" fill="none" stroke-linecap="square" stroke-linejoin="miter"/><path d="M894.4,508 L894.4,516" stroke="#ffffff" stroke-width="2.72" fill="none" stroke-linecap="square" stroke-linejoin="miter"/><path d="M901.5,508 L901.5,516" stroke="#ffffff" stroke-width="2.72" fill="none" stroke-linecap="square" stroke-linejoin="miter"/><path d="M966.8,508 L966.8,516" stroke="#ffffff" stroke-width="2.72" fill="none" stroke-linecap="square" stroke-linejoin="miter"/><path d="M977,508 L977,516" stroke="#ffffff" stroke-width="2.72" fill="none" stroke-linecap="square" stroke-linejoin="miter"/><path d="M1067.6,508 L1067.6,516" stroke="#ffffff" stroke-width="2.72" fill="none" stroke-linecap="square" stroke-linejoin="miter"/><path d="M1077,508 L1077,516" stroke="#ffffff" stroke-width="2.72" fill="none" stroke-linecap="square" stroke-linejoin="miter"/><path d="M1165,508 L1165,516" stroke="#ffffff" stroke-width="2.72" fill="none" stroke-linecap="square" stroke-linejoin="miter"/><path d="M1175,508 L1175,516" stroke="#ffffff" stroke-width="2.72" fill="none" stroke-linecap="square" stroke-linejoin="miter"/><path d="M1263,508 L1263,516" stroke="#ffffff" stroke-width="2.72" fill="none" stroke-linecap="square" stroke-linejoin="miter"/><path d="M1274,508 L1274,516" stroke="#ffffff" stroke-width="2.72" fill="none" stroke-linecap="square" stroke-linejoin="miter"/><path d="M1363,508 L1363,516" stroke="#ffffff" stroke-width="2.72" fill="none" stroke-linecap="square" stroke-linejoin="miter"/><path d="M1373,508 L1373,516" stroke="#ffffff" stroke-width="2.72" fill="none" stroke-linecap="square" stroke-linejoin="miter"/><path d="M512.6,542.6 L582,542.6" stroke="#ffffff" stroke-width="3.40" fill="none" stroke-linecap="square" stroke-linejoin="miter"/><path d="M592,542.6 L630,542.6" stroke="#ffffff" stroke-width="3.40" fill="none" stroke-linecap="square" stroke-linejoin="miter"/><path d="M546.4,543 L546.4,643" stroke="#ffffff" stroke-width="3.06" fill="none" stroke-linecap="square" stroke-linejoin="miter"/><path d="M543,632 L526,632 L526,667" stroke="#ffffff" stroke-width="2.04" fill="none" stroke-linecap="square" stroke-linejoin="miter"/><path d="M515.7,668 L547,668 L547,654" stroke="#ffffff" stroke-width="3.06" fill="none" stroke-linecap="square" stroke-linejoin="miter"/><path d="M527,668 L527,862" stroke="#ffffff" stroke-width="3.40" fill="none" stroke-linecap="square" stroke-linejoin="miter"/><path d="M514,765.5 L532,765.5" stroke="#ffffff" stroke-width="3.06" fill="none" stroke-linecap="square" stroke-linejoin="miter"/><path d="M514,863 L545,863 L545,876" stroke="#ffffff" stroke-width="3.06" fill="none" stroke-linecap="square" stroke-linejoin="miter"/><path d="M526,878 L526,893" stroke="#ffffff" stroke-width="1.02" fill="none" stroke-linecap="square" stroke-linejoin="miter"/><path d="M526,895 L544.5,895" stroke="#ffffff" stroke-width="3.06" fill="none" stroke-linecap="square" stroke-linejoin="miter"/><path d="M545.3,886.4 L545.3,909" stroke="#ffffff" stroke-width="3.06" fill="none" stroke-linecap="square" stroke-linejoin="miter"/><path d="M544.5,908 L628,908" stroke="#ffffff" stroke-width="3.40" fill="none" stroke-linecap="square" stroke-linejoin="miter"/><path d="M564,887 L564,907" stroke="#ffffff" stroke-width="2.72" fill="none" stroke-linecap="square" stroke-linejoin="miter"/><path d="M582,887 L582,907" stroke="#ffffff" stroke-width="2.72" fill="none" stroke-linecap="square" stroke-linejoin="miter"/><path d="M554,888 L575,888" stroke="#ffffff" stroke-width="3.06" fill="none" stroke-linecap="square" stroke-linejoin="miter"/><path d="M628,542.6 L628,675" stroke="#ffffff" stroke-width="3.40" fill="none" stroke-linecap="square" stroke-linejoin="miter"/><path d="M628,684 L628,847" stroke="#ffffff" stroke-width="3.40" fill="none" stroke-linecap="square" stroke-linejoin="miter"/><path d="M628,857 L628,909" stroke="#ffffff" stroke-width="3.40" fill="none" stroke-linecap="square" stroke-linejoin="miter"/><path d="M598,542.6 L598,563" stroke="#ffffff" stroke-width="3.06" fill="none" stroke-linecap="square" stroke-linejoin="miter"/><path d="M592,570 L608.6,570 L608.6,599 L592,599" stroke="#ffffff" stroke-width="3.06" fill="none" stroke-linecap="square" stroke-linejoin="miter"/><path d="M608.6,585 L628,585" stroke="#ffffff" stroke-width="2.72" fill="none" stroke-linecap="square" stroke-linejoin="miter"/><path d="M618,570 L628,570" stroke="#ffffff" stroke-width="2.72" fill="none" stroke-linecap="square" stroke-linejoin="miter"/><path d="M616.5,599 L628,599" stroke="#ffffff" stroke-width="2.72" fill="none" stroke-linecap="square" stroke-linejoin="miter"/><path d="M598,607 L598,622" stroke="#ffffff" stroke-width="3.06" fill="none" stroke-linecap="square" stroke-linejoin="miter"/><path d="M596,622 L628,622" stroke="#ffffff" stroke-width="3.06" fill="none" stroke-linecap="square" stroke-linejoin="miter"/><path d="M547,622 L585,622" stroke="#ffffff" stroke-width="3.06" fill="none" stroke-linecap="square" stroke-linejoin="miter"/><path d="M583,622 L583,643" stroke="#ffffff" stroke-width="2.72" fill="none" stroke-linecap="square" stroke-linejoin="miter"/><path d="M566,624.5 L566,643" stroke="#ffffff" stroke-width="2.72" fill="none" stroke-linecap="square" stroke-linejoin="miter"/><path d="M555,642.5 L577,642.5" stroke="#ffffff" stroke-width="3.06" fill="none" stroke-linecap="square" stroke-linejoin="miter"/><path d="M653.5,593 L653.5,822" stroke="#ffffff" stroke-width="3.40" fill="none" stroke-linecap="square" stroke-linejoin="miter"/><path d="M884,592.5 L884,823" stroke="#ffffff" stroke-width="3.40" fill="none" stroke-linecap="square" stroke-linejoin="miter"/><path d="M652.7,542.6 L739,542.6" stroke="#ffffff" stroke-width="3.06" fill="none" stroke-linecap="square" stroke-linejoin="miter"/><path d="M653.5,542.6 L653.5,582" stroke="#ffffff" stroke-width="3.06" fill="none" stroke-linecap="square" stroke-linejoin="miter"/><path d="M653.5,580 L689,580" stroke="#ffffff" stroke-width="3.06" fill="none" stroke-linecap="square" stroke-linejoin="miter"/><path d="M739,542.6 L739,552 L748,552 L748,580 L706,580" stroke="#ffffff" stroke-width="3.06" fill="none" stroke-linecap="square" stroke-linejoin="miter"/><path d="M710,544 L710,557" stroke="#ffffff" stroke-width="2.72" fill="none" stroke-linecap="square" stroke-linejoin="miter"/><path d="M710,566 L710,580" stroke="#ffffff" stroke-width="2.72" fill="none" stroke-linecap="square" stroke-linejoin="miter"/><path d="M670,841.7 L869,841.7" stroke="#ffffff" stroke-width="3.06" fill="none" stroke-linecap="square" stroke-linejoin="miter"/><path d="M869,841.7 L869,857 L884,857 L884,910" stroke="#ffffff" stroke-width="3.06" fill="none" stroke-linecap="square" stroke-linejoin="miter"/><path d="M652,908.8 L884,908.8" stroke="#ffffff" stroke-width="3.40" fill="none" stroke-linecap="square" stroke-linejoin="miter"/><path d="M652.5,856 L652.5,910" stroke="#ffffff" stroke-width="3.06" fill="none" stroke-linecap="square" stroke-linejoin="miter"/><path d="M815,842 L815,848 L821.5,848 L821.5,842" stroke="#ffffff" stroke-width="2.04" fill="none" stroke-linecap="square" stroke-linejoin="miter"/><path d="M713.5,842 L713.5,848 L720,848 L720,842" stroke="#ffffff" stroke-width="2.04" fill="none" stroke-linecap="square" stroke-linejoin="miter"/><path d="M869,906.5 L869,897 L873,897 L873,906.5" stroke="#ffffff" stroke-width="2.04" fill="none" stroke-linecap="square" stroke-linejoin="miter"/><path d="M871,858.5 L884,858.5" stroke="#ffffff" stroke-width="1.02" fill="none" stroke-linecap="square" stroke-linejoin="miter"/><path d="M871,862 L884,862" stroke="#ffffff" stroke-width="1.02" fill="none" stroke-linecap="square" stroke-linejoin="miter"/><path d="M880.5 839.5 L886 843.5 L880.5 847.5 Z" stroke="#fff" stroke-width="2" fill="none"/><path d="M653 839.5 L658.5 843.5 L653 847.5 Z" stroke="#fff" stroke-width="2" fill="none"/><rect x="656.5" y="852.5" width="13" height="38.5" stroke="#d2442a" stroke-width="1.6" fill="none"/><path d="M670,838 L670,891" stroke="#8b4a3e" stroke-width="1.19" fill="none" stroke-linecap="square" stroke-linejoin="miter"/><path d="M799,541.7 L886.7,541.7 L886.7,581.7 L853,581.7" stroke="#ffffff" stroke-width="3.40" fill="none" stroke-linecap="square" stroke-linejoin="miter"/><path d="M835,581.7 L789,581.7 L789,550 L799,550 L799,541.7" stroke="#ffffff" stroke-width="3.06" fill="none" stroke-linecap="square" stroke-linejoin="miter"/><path d="M803,561 L803,581.7" stroke="#ffffff" stroke-width="2.72" fill="none" stroke-linecap="square" stroke-linejoin="miter"/><path d="M911,542 L911,556.7" stroke="#ffffff" stroke-width="3.06" fill="none" stroke-linecap="square" stroke-linejoin="miter"/><path d="M911,565 L911,590" stroke="#ffffff" stroke-width="3.06" fill="none" stroke-linecap="square" stroke-linejoin="miter"/><path d="M911,598 L911,623" stroke="#ffffff" stroke-width="3.06" fill="none" stroke-linecap="square" stroke-linejoin="miter"/><path d="M911,633 L911,648" stroke="#ffffff" stroke-width="3.06" fill="none" stroke-linecap="square" stroke-linejoin="miter"/><path d="M913,577.5 L941.7,577.5" stroke="#ffffff" stroke-width="3.06" fill="none" stroke-linecap="square" stroke-linejoin="miter"/><path d="M913,611.7 L941.7,611.7" stroke="#ffffff" stroke-width="3.06" fill="none" stroke-linecap="square" stroke-linejoin="miter"/><path d="M911,542.5 L930,542.5" stroke="#ffffff" stroke-width="3.06" fill="none" stroke-linecap="square" stroke-linejoin="miter"/><path d="M944,542 L944,645" stroke="#ffffff" stroke-width="3.06" fill="none" stroke-linecap="square" stroke-linejoin="miter"/><path d="M941.7,542.5 L1040,542.5" stroke="#ffffff" stroke-width="3.06" fill="none" stroke-linecap="square" stroke-linejoin="miter"/><path d="M911,645 L1021.7,645" stroke="#ffffff" stroke-width="3.40" fill="none" stroke-linecap="square" stroke-linejoin="miter"/><path d="M944,553 L954,553 L954,544" stroke="#ffffff" stroke-width="2.04" fill="none" stroke-linecap="square" stroke-linejoin="miter"/><path d="M1011,545 L1011,557" stroke="#ffffff" stroke-width="1.19" fill="none" stroke-linecap="square" stroke-linejoin="miter"/><path d="M1014.5,545 L1014.5,557" stroke="#ffffff" stroke-width="1.19" fill="none" stroke-linecap="square" stroke-linejoin="miter"/><path d="M1018,545 L1018,557" stroke="#ffffff" stroke-width="1.19" fill="none" stroke-linecap="square" stroke-linejoin="miter"/><path d="M1021.5,545 L1021.5,557" stroke="#ffffff" stroke-width="1.19" fill="none" stroke-linecap="square" stroke-linejoin="miter"/><path d="M998,557.5 L1036.7,557.5" stroke="#ffffff" stroke-width="3.06" fill="none" stroke-linecap="square" stroke-linejoin="miter"/><path d="M1036.7,557 L1036.7,646" stroke="#ffffff" stroke-width="3.06" fill="none" stroke-linecap="square" stroke-linejoin="miter"/><path d="M1021,628 L1035,628" stroke="#ffffff" stroke-width="1.19" fill="none" stroke-linecap="square" stroke-linejoin="miter"/><path d="M1021,632 L1035,632" stroke="#ffffff" stroke-width="1.19" fill="none" stroke-linecap="square" stroke-linejoin="miter"/><path d="M1021,636 L1035,636" stroke="#ffffff" stroke-width="1.19" fill="none" stroke-linecap="square" stroke-linejoin="miter"/><path d="M1021,640 L1035,640" stroke="#ffffff" stroke-width="1.19" fill="none" stroke-linecap="square" stroke-linejoin="miter"/><path d="M1021,624 L1021,646" stroke="#ffffff" stroke-width="1.36" fill="none" stroke-linecap="square" stroke-linejoin="miter"/><path d="M1020,646.7 L1020,660 L1055,660 L1055,646.7" stroke="#ffffff" stroke-width="2.55" fill="none" stroke-linecap="square" stroke-linejoin="miter"/><path d="M990.8,647 L990.8,912" stroke="#ffffff" stroke-width="3.06" fill="none" stroke-linecap="square" stroke-linejoin="miter"/><path d="M1050,542.5 L1090,542.5" stroke="#ffffff" stroke-width="3.06" fill="none" stroke-linecap="square" stroke-linejoin="miter"/><path d="M1088,542.5 L1088,645" stroke="#ffffff" stroke-width="3.06" fill="none" stroke-linecap="square" stroke-linejoin="miter"/><path d="M1052,645 L1165,645" stroke="#ffffff" stroke-width="3.06" fill="none" stroke-linecap="square" stroke-linejoin="miter"/><path d="M1052,649.5 L1165,649.5" stroke="#ffffff" stroke-width="2.04" fill="none" stroke-linecap="square" stroke-linejoin="miter"/><path d="M1063,543 L1063,557 L1069,557" stroke="#ffffff" stroke-width="2.55" fill="none" stroke-linecap="square" stroke-linejoin="miter"/><path d="M1069,548 L1087,548" stroke="#ffffff" stroke-width="2.04" fill="none" stroke-linecap="square" stroke-linejoin="miter"/><path d="M1087,541 L1087,645" stroke="#ffffff" stroke-width="2.72" fill="none" stroke-linecap="square" stroke-linejoin="miter"/><path d="M1127,579 L1127,645" stroke="#ffffff" stroke-width="2.72" fill="none" stroke-linecap="square" stroke-linejoin="miter"/><path d="M1087,592 L1104.6,592" stroke="#ffffff" stroke-width="3.06" fill="none" stroke-linecap="square" stroke-linejoin="miter"/><path d="M1105.5,570 L1105.5,541.8 L1170,541.8 L1170,552" stroke="#ffffff" stroke-width="3.40" fill="none" stroke-linecap="square" stroke-linejoin="miter"/><path d="M1170,562 L1170,579 L1105.5,579 L1105.5,562" stroke="#ffffff" stroke-width="3.40" fill="none" stroke-linecap="square" stroke-linejoin="miter"/><path d="M1133 650.5 L1149 646 L1147.5 654.5 Z" fill="#f5b46a"/><path d="M909.7,645 L909.7,801" stroke="#ffffff" stroke-width="3.06" fill="none" stroke-linecap="square" stroke-linejoin="miter"/><path d="M909.7,810 L909.7,873" stroke="#ffffff" stroke-width="3.06" fill="none" stroke-linecap="square" stroke-linejoin="miter"/><path d="M910.8,765 L990,765" stroke="#ffffff" stroke-width="3.06" fill="none" stroke-linecap="square" stroke-linejoin="miter"/><path d="M909.7,799 L958.3,799" stroke="#ffffff" stroke-width="3.06" fill="none" stroke-linecap="square" stroke-linejoin="miter"/><path d="M968.7,799 L980.3,799" stroke="#ffffff" stroke-width="3.06" fill="none" stroke-linecap="square" stroke-linejoin="miter"/><path d="M912,717 L959,717" stroke="#ffffff" stroke-width="2.72" fill="none" stroke-linecap="square" stroke-linejoin="miter"/><path d="M930.5,717 L930.5,736" stroke="#ffffff" stroke-width="2.72" fill="none" stroke-linecap="square" stroke-linejoin="miter"/><path d="M969,717 L979,717 L979,735 L971,735 L971,765" stroke="#ffffff" stroke-width="2.72" fill="none" stroke-linecap="square" stroke-linejoin="miter"/><path d="M959,747 L930.5,747 L930.5,765" stroke="#ffffff" stroke-width="2.72" fill="none" stroke-linecap="square" stroke-linejoin="miter"/><path d="M942,768.7 L942,777" stroke="#ffffff" stroke-width="2.55" fill="none" stroke-linecap="square" stroke-linejoin="miter"/><path d="M963,771 L968.7,771" stroke="#ffffff" stroke-width="2.55" fill="none" stroke-linecap="square" stroke-linejoin="miter"/><path d="M971,766.4 L971,798.8" stroke="#ffffff" stroke-width="2.55" fill="none" stroke-linecap="square" stroke-linejoin="miter"/><path d="M939.8,786 L939.8,796.5" stroke="#ffffff" stroke-width="2.55" fill="none" stroke-linecap="square" stroke-linejoin="miter"/><path d="M909.7,825.5 L921,825.5" stroke="#ffffff" stroke-width="2.04" fill="none" stroke-linecap="square" stroke-linejoin="miter"/><path d="M910.8,869.4 L990,869.4" stroke="#ffffff" stroke-width="3.06" fill="none" stroke-linecap="square" stroke-linejoin="miter"/><path d="M909.7,881 L909.7,910" stroke="#ffffff" stroke-width="3.06" fill="none" stroke-linecap="square" stroke-linejoin="miter"/><path d="M920,881 L950,881" stroke="#ffffff" stroke-width="3.06" fill="none" stroke-linecap="square" stroke-linejoin="miter"/><path d="M948,881 L948,910" stroke="#ffffff" stroke-width="3.06" fill="none" stroke-linecap="square" stroke-linejoin="miter"/><path d="M907,910 L992,910" stroke="#ffffff" stroke-width="3.40" fill="none" stroke-linecap="square" stroke-linejoin="miter"/><path d="M884,910 L884,928.5 L911,928.5 L911,910" stroke="#ffffff" stroke-width="2.55" fill="none" stroke-linecap="square" stroke-linejoin="miter"/><path d="M1192,590 L1192,541.8 L1268.7,541.8 L1268.7,889" stroke="#6e3f41" stroke-width="3.6" fill="none" stroke-linecap="square"/><path d="M1164.8,590 L1237.7,590" stroke="#6e3f41" stroke-width="3.6" fill="none" stroke-linecap="square"/><path d="M1237.7,541.8 L1237.7,657.6" stroke="#6e3f41" stroke-width="3.6" fill="none" stroke-linecap="square"/><path d="M1165.7,590 L1165.7,889" stroke="#6e3f41" stroke-width="3.6" fill="none" stroke-linecap="square"/><path d="M1156.6,663 L1268.7,663" stroke="#6e3f41" stroke-width="3.6" fill="none" stroke-linecap="square"/><path d="M1297.8,889 L1297.8,541.8 L1410,541.8" stroke="#6e3f41" stroke-width="3.6" fill="none" stroke-linecap="square"/><path d="M1400,541.8 L1400,889" stroke="#6e3f41" stroke-width="3.6" fill="none" stroke-linecap="square"/><path d="M1297.8,655 L1410,655" stroke="#6e3f41" stroke-width="3.6" fill="none" stroke-linecap="square"/><path d="M1154,775.6 L1268,775.6" stroke="#6e3f41" stroke-width="3.6" fill="none" stroke-linecap="square"/><path d="M1154,889 L1269,889" stroke="#6e3f41" stroke-width="3.6" fill="none" stroke-linecap="square"/><path d="M1298,775.6 L1411,775.6" stroke="#6e3f41" stroke-width="3.6" fill="none" stroke-linecap="square"/><path d="M1295.5,889 L1411,889" stroke="#6e3f41" stroke-width="3.6" fill="none" stroke-linecap="square"/><path d="M1400 543.7 V566.5" stroke="#35d24a" stroke-width="2.2" stroke-dasharray="3 1.2"/><path d="M1400 587.4 V610" stroke="#35d24a" stroke-width="2.2" stroke-dasharray="3 1.2"/><path d="M1400 630 V653" stroke="#35d24a" stroke-width="2.2" stroke-dasharray="3 1.2"/><path d="M1400 656.7 V679.5" stroke="#35d24a" stroke-width="2.2" stroke-dasharray="3 1.2"/><path d="M1400 708.5 V730.5" stroke="#35d24a" stroke-width="2.2" stroke-dasharray="3 1.2"/><path d="M1400 751 V773" stroke="#35d24a" stroke-width="2.2" stroke-dasharray="3 1.2"/><path d="M1400 778 V800" stroke="#35d24a" stroke-width="2.2" stroke-dasharray="3 1.2"/><path d="M1400 820.8 V842.7" stroke="#35d24a" stroke-width="2.2" stroke-dasharray="3 1.2"/><path d="M1400 863.6 V886.7" stroke="#35d24a" stroke-width="2.2" stroke-dasharray="3 1.2"/><path d="M1165.6 665 V688.6" stroke="#35d24a" stroke-width="2.2" stroke-dasharray="3 1.2"/><path d="M1165.6 708.5 V730.5" stroke="#35d24a" stroke-width="2.2" stroke-dasharray="3 1.2"/><path d="M1165.6 751 V773" stroke="#35d24a" stroke-width="2.2" stroke-dasharray="3 1.2"/><path d="M1165.6 778 V800" stroke="#35d24a" stroke-width="2.2" stroke-dasharray="3 1.2"/><path d="M1165.6 820.8 V842.7" stroke="#35d24a" stroke-width="2.2" stroke-dasharray="3 1.2"/><path d="M1165.6 863.6 V886.7" stroke="#35d24a" stroke-width="2.2" stroke-dasharray="3 1.2"/><path d="M1223 541.8 A12.8 12.8 0 0 0 1235.8 554.6 V541.8 M1239.5 541.8 V554.6 A12.8 12.8 0 0 0 1252.3 541.8" stroke="#e01414" stroke-width="2" fill="none"/><path d="M1238.6 646.6 A13.7 13.7 0 0 0 1224.9 660.3 H1238.6" stroke="#e01414" stroke-width="2" fill="none"/><path d="M1269.6 646.6 A13.7 13.7 0 0 0 1255.9 660.3 H1269.6" stroke="#e01414" stroke-width="2" fill="none"/><rect x="1254.3" y="734.0" width="13.700000000000045" height="4.5" stroke="#6e3f41" stroke-width="1.2" fill="none"/><rect x="1254.3" y="761.0" width="13.700000000000045" height="4.5" stroke="#6e3f41" stroke-width="1.2" fill="none"/><path d="M1254.7 737.5 H1268 A11.5 11.5 0 0 1 1256.5 749.0 A11.5 11.5 0 0 1 1268 760.5 H1254.7" stroke="#e01414" stroke-width="2" fill="none"/><rect x="1254.3" y="845.0" width="13.700000000000045" height="4.5" stroke="#6e3f41" stroke-width="1.2" fill="none"/><rect x="1254.3" y="872.0" width="13.700000000000045" height="4.5" stroke="#6e3f41" stroke-width="1.2" fill="none"/><path d="M1254.7 848.5 H1268 A11.5 11.5 0 0 1 1256.5 860.0 A11.5 11.5 0 0 1 1268 871.5 H1254.7" stroke="#e01414" stroke-width="2" fill="none"/><rect x="1298" y="616.0" width="13.700000000000045" height="4.5" stroke="#6e3f41" stroke-width="1.2" fill="none"/><rect x="1298" y="643.0" width="13.700000000000045" height="4.5" stroke="#6e3f41" stroke-width="1.2" fill="none"/><path d="M1311.5 620.0 H1298 A11.5 11.5 0 0 0 1309.5 631.5 A11.5 11.5 0 0 0 1298 643.0 H1311.5" stroke="#e01414" stroke-width="2" fill="none"/><rect x="1298" y="664.5" width="13.700000000000045" height="4.5" stroke="#6e3f41" stroke-width="1.2" fill="none"/><rect x="1298" y="691.5" width="13.700000000000045" height="4.5" stroke="#6e3f41" stroke-width="1.2" fill="none"/><path d="M1311.5 668.5 H1298 A11.5 11.5 0 0 0 1309.5 680 A11.5 11.5 0 0 0 1298 691.5 H1311.5" stroke="#e01414" stroke-width="2" fill="none"/><rect x="1298" y="784.0" width="13.700000000000045" height="4.5" stroke="#6e3f41" stroke-width="1.2" fill="none"/><rect x="1298" y="811.0" width="13.700000000000045" height="4.5" stroke="#6e3f41" stroke-width="1.2" fill="none"/><path d="M1311.5 788.0 H1298 A11.5 11.5 0 0 0 1309.5 799.5 A11.5 11.5 0 0 0 1298 811.0 H1311.5" stroke="#e01414" stroke-width="2" fill="none"/><path d="M1270 889 V901.7 A12.7 12.7 0 0 0 1282.7 889 A12.7 12.7 0 0 0 1295.4 901.7 V889" stroke="#e01414" stroke-width="2" fill="none"/><path d="M954 612.5 H966 M960 606.5 V618.5" stroke="#fff" stroke-width="1"/><rect x="1154" y="429" width="2.5" height="1.8" fill="#fff"/></svg>
<svg style="left:0;top:0" width="1920" height="1080" viewBox="0 0 1920 1080"><path d="M76.2 151 H264.4 L256.4 175 H67.3 Z" stroke="none" fill="#3b4453" stroke-width="1" /><path d="M16.7 155.8 L10 170.8" stroke="#4c5460" fill="none" stroke-width="1.3" /><path d="M303.3 155.8 L296.7 170.8" stroke="#4c5460" fill="none" stroke-width="1.3" /><path d="M244.5 159.5 L253 168 M253 159.5 L244.5 168" stroke="#9aa0a8" fill="none" stroke-width="1.6" /><path d="M274 163.5 H286 M280 157.5 V169.5" stroke="#ffffff" fill="none" stroke-width="2" /><path d="M17 1050 H90 L82 1074 H8.5 Z" stroke="none" fill="#3b4453" stroke-width="1" /><path d="M171 1054 L165 1069 M211 1054 L205 1069" stroke="#4c5460" fill="none" stroke-width="1.2" /><path d="M181 1062 H193 M187 1056 V1068" stroke="#ffffff" fill="none" stroke-width="2" /><rect x="1859" y="196" width="9" height="2.2" fill="#e6e7ea" /><path d="M1880 192 H1887 V199 H1880 Z M1882.5 192 V189.5 H1889.5 V196.5 H1887" stroke="#e6e7ea" fill="none" stroke-width="1.5" /><path d="M1900 190.5 L1908 198.5 M1908 190.5 L1900 198.5" stroke="#e6e7ea" fill="none" stroke-width="1.8" /><circle cx="1837.1" cy="285.8" r="54" fill="none" stroke="#4d545e" stroke-width="11.5"/><rect x="1811.5" y="260" width="51" height="51" fill="#bcc0c6" /><rect x="1820" y="268.5" width="34" height="34" fill="#aeb3ba" /><text x="1837" y="291.5" text-anchor="middle" font-family="Liberation Sans" font-weight="700" font-size="14" fill="#51565e" textLength="24" lengthAdjust="spacingAndGlyphs">TOP</text><text x="1837" y="239.5" text-anchor="middle" font-family="Liberation Sans" font-weight="700" font-size="22" fill="#c6c9cf">N</text><text x="1837" y="350.5" text-anchor="middle" font-family="Liberation Sans" font-weight="700" font-size="22" fill="#c6c9cf">S</text><text x="1780.5" y="294.5" text-anchor="middle" font-family="Liberation Sans" font-weight="700" font-size="22" fill="#c6c9cf">W</text><text x="1893.5" y="294.5" text-anchor="middle" font-family="Liberation Sans" font-weight="700" font-size="22" fill="#c6c9cf">E</text><rect x="1813" y="374" width="47.5" height="16.5" fill="#9a9fa7" rx="4"/><text x="1816.5" y="386" font-family="Liberation Sans" font-size="11" fill="#40454d" textLength="25" lengthAdjust="spacingAndGlyphs">WCS</text><path d="M1846 380.5 H1854 L1850 385 Z" stroke="#5a5f67" fill="none" stroke-width="0.9" /><rect x="1884" y="416.5" width="31.5" height="210.5" fill="#4a515c" rx="4"/><circle cx="1909.5" cy="421.5" r="2.3" fill="none" stroke="#757c86" stroke-width="1"/><circle cx="1900" cy="446" r="10" fill="none" stroke="#757c86" stroke-width="1.5"/><circle cx="1900" cy="446" r="5.5" fill="none" stroke="#757c86" stroke-width="1.5"/><path d="M1897 465.5 H1902 L1899.5 468 Z" stroke="none" fill="#757c86" stroke-width="1" /><path d="M1893 500 Q1889 490 1893 484 L1896 488 V476 Q1898 474 1900 476 V486 V473 Q1902 471 1904 473 V486 V475 Q1906 473 1908 475 V488 V479 Q1910 477 1911 479 V492 Q1910 502 1902 503 Z" stroke="#757c86" fill="none" stroke-width="1.3" /><path d="M1890 510 L1910 530 M1910 510 L1890 530 M1890 510 V516 M1890 510 H1896 M1910 510 H1904 M1910 510 V516 M1890 530 V524 M1890 530 H1896" stroke="#757c86" fill="none" stroke-width="1.3" /><circle cx="1905" cy="523" r="4.5" fill="#4a515c" stroke="#757c86" stroke-width="1.4"/><path d="M1897 535.5 H1902 L1899.5 538 Z" stroke="none" fill="#757c86" stroke-width="1" /><path d="M1900 546 V570 M1896 551 L1900 546 L1904 551 M1891 559 Q1889 563 1900 564 Q1911 563 1909 559" stroke="#757c86" fill="none" stroke-width="1.4" /><path d="M1897 577.5 H1902 L1899.5 580 Z" stroke="none" fill="#757c86" stroke-width="1" /><rect x="1889.0" y="588" width="6" height="6" fill="none" stroke="#757c86" stroke-width="1"/><rect x="1896.2" y="588" width="6" height="6" fill="none" stroke="#757c86" stroke-width="1"/><rect x="1903.4" y="588" width="6" height="6" fill="none" stroke="#757c86" stroke-width="1"/><rect x="1889" y="597" width="21" height="13" fill="none" stroke="#757c86" stroke-width="1.2"/><path d="M1896 600 L1904 603.5 L1896 607 Z" stroke="none" fill="#757c86" stroke-width="1" /><circle cx="1909.5" cy="621" r="2.3" fill="none" stroke="#757c86" stroke-width="1"/><path d="M21.4 973.5 V1024.4 H71.5" stroke="#e8eaee" fill="none" stroke-width="1.4" /><rect x="17" y="1019" width="10" height="10" fill="none" stroke="#e8eaee" stroke-width="1.3"/><path d="M23.5 957.5 L29 964.5 L34.5 957.5 M29 964.5 V970.5" stroke="#e8eaee" fill="none" stroke-width="1.4" /><path d="M75.5 1010 L88.5 1023 M88.5 1010 L75.5 1023" stroke="#e8eaee" fill="none" stroke-width="1.4" /><rect x="265" y="967" width="25.8" height="78" fill="#2b313b" /><rect x="269.8" y="972.0" width="1.8" height="1.8" fill="#ffffff" /><rect x="272.35" y="972.0" width="1.8" height="1.8" fill="#ffffff" /><rect x="274.90000000000003" y="972.0" width="1.8" height="1.8" fill="#ffffff" /><rect x="277.45" y="972.0" width="1.8" height="1.8" fill="#ffffff" /><rect x="280.0" y="972.0" width="1.8" height="1.8" fill="#ffffff" /><rect x="282.55" y="972.0" width="1.8" height="1.8" fill="#ffffff" /><rect x="285.1" y="972.0" width="1.8" height="1.8" fill="#ffffff" /><rect x="269.8" y="974.8" width="1.8" height="1.8" fill="#ffffff" /><rect x="272.35" y="974.8" width="1.8" height="1.8" fill="#ffffff" /><rect x="274.90000000000003" y="974.8" width="1.8" height="1.8" fill="#ffffff" /><rect x="277.45" y="974.8" width="1.8" height="1.8" fill="#ffffff" /><rect x="280.0" y="974.8" width="1.8" height="1.8" fill="#ffffff" /><rect x="282.55" y="974.8" width="1.8" height="1.8" fill="#ffffff" /><rect x="285.1" y="974.8" width="1.8" height="1.8" fill="#ffffff" /><path d="M273.5 985.5 L282.5 994.5 M282.5 985.5 L273.5 994.5" stroke="#f2f2f2" fill="none" stroke-width="1.7" /><path d="M271 1021 L279.5 1012.5" stroke="#e6e7ea" fill="none" stroke-width="2.6" stroke-linecap="round"/><path d="M278 1014 Q276 1008 281 1007 L279.5 1010.5 L282 1012.5 L285 1010 Q285.5 1015 279.5 1014.5" stroke="none" fill="#e6e7ea" stroke-width="1" /><rect x="290.8" y="968" width="1123" height="56" fill="#c9c9c9" /><rect x="290.8" y="1023.8" width="1123" height="1.4" fill="#222831" /><rect x="290.8" y="1025" width="1123" height="20.3" fill="#ffffff" /><path d="M298 1041 H304.5" stroke="#d92f2f" fill="none" stroke-width="1.5" /><path d="M308.5 1030 V1037" stroke="#d92f2f" fill="none" stroke-width="1.3" /><rect x="307" y="1039" width="4" height="4" fill="none" stroke="#b8b8b8" stroke-width="0.8"/><path d="M313.7 1033 H320.5 L317.1 1036.5 Z" stroke="none" fill="#5a5a5a" stroke-width="1" /><rect x="744.4" y="1026.8" width="17.0" height="15.6" fill="#d9d9d9" rx="2.5"/><rect x="764" y="1026.8" width="37.60000000000002" height="15.6" fill="#d9d9d9" rx="2.5"/><rect x="805" y="1026.8" width="45" height="15.6" fill="#d9d9d9" rx="2.5"/><rect x="853" y="1026.8" width="37.5" height="15.6" fill="#d9d9d9" rx="2.5"/><rect x="894.5" y="1026.8" width="23.5" height="15.6" fill="#d9d9d9" rx="2.5"/><rect x="921.5" y="1026.8" width="45.10000000000002" height="15.6" fill="#d9d9d9" rx="2.5"/><rect x="969.5" y="1026.8" width="30.899999999999977" height="15.6" fill="#d9d9d9" rx="2.5"/><rect x="1003" y="1026.8" width="45" height="15.6" fill="#d9d9d9" rx="2.5"/><rect x="1051" y="1026.8" width="32" height="15.6" fill="#d9d9d9" rx="2.5"/><path d="M1402 1037.5 L1406 1033.5 L1410 1037.5 Z" stroke="none" fill="#555" stroke-width="1" /><rect x="961.7" y="1052" width="140.5999999999999" height="23.5" fill="#333a46" /><rect x="1105" y="1052" width="46.799999999999955" height="23.5" fill="#333a46" /><rect x="1154.4" y="1052" width="63.799999999999955" height="23.5" fill="#333a46" /><rect x="1222" y="1052" width="23.59999999999991" height="23.5" fill="#333a46" /><rect x="1247" y="1052" width="23" height="23.5" fill="#333a46" /><rect x="1272" y="1052" width="61" height="23.5" fill="#333a46" /><rect x="1335" y="1052" width="66" height="23.5" fill="#333a46" /><rect x="1401" y="1052" width="26" height="23.5" fill="#333a46" /><rect x="1430" y="1052" width="11.5" height="23.5" fill="#333a46" /><rect x="1442.8" y="1052" width="22.90000000000009" height="23.5" fill="#333a46" /><rect x="1468.3" y="1052" width="21.700000000000045" height="23.5" fill="#333a46" /><rect x="1492.5" y="1052" width="23.0" height="23.5" fill="#333a46" /><rect x="1519.3" y="1052" width="104.70000000000005" height="23.5" fill="#333a46" /><rect x="1627.8" y="1052" width="39.600000000000136" height="23.5" fill="#333a46" /><rect x="1668.6" y="1052" width="24.40000000000009" height="23.5" fill="#333a46" /><rect x="1695.4" y="1052" width="24.299999999999955" height="23.5" fill="#333a46" /><rect x="1722" y="1052" width="39.799999999999955" height="23.5" fill="#333a46" /><rect x="1763" y="1052" width="24.299999999999955" height="23.5" fill="#333a46" /><rect x="1791" y="1052" width="23" height="23.5" fill="#333a46" /><rect x="1816.7" y="1052" width="49.700000000000045" height="23.5" fill="#333a46" /><rect x="1869" y="1052" width="48.5" height="23.5" fill="#333a46" /><rect x="1403" y="1052" width="21" height="23.5" fill="#4f7db3" /><rect x="1492.5" y="1052" width="23" height="23.5" fill="#4f7db3" /><rect x="1519.3" y="1052" width="23" height="23.5" fill="#4f7db3" /><rect x="1791" y="1052" width="23" height="23.5" fill="#4d6a8f" /><path d="M1160 1058 V1070 M1164 1058 V1070 M1168 1058 V1070 M1157 1061 H1171 M1157 1065 H1171 M1157 1068.5 H1171" stroke="#dfe2e6" fill="none" stroke-width="1.2" /><rect x="1185" y="1058.5" width="1.8" height="1.8" fill="#dfe2e6" /><rect x="1185" y="1063.5" width="1.8" height="1.8" fill="#dfe2e6" /><rect x="1185" y="1068.5" width="1.8" height="1.8" fill="#dfe2e6" /><rect x="1190" y="1058.5" width="1.8" height="1.8" fill="#dfe2e6" /><rect x="1190" y="1063.5" width="1.8" height="1.8" fill="#dfe2e6" /><rect x="1190" y="1068.5" width="1.8" height="1.8" fill="#dfe2e6" /><rect x="1195" y="1058.5" width="1.8" height="1.8" fill="#dfe2e6" /><rect x="1195" y="1063.5" width="1.8" height="1.8" fill="#dfe2e6" /><rect x="1195" y="1068.5" width="1.8" height="1.8" fill="#dfe2e6" /><polygon points="1207.0,1062 1214.0,1062 1210.5,1065.5" fill="#dfe2e6"/><path d="M1227 1068 H1233 V1058 H1240 V1064 H1233" stroke="#dfe2e6" fill="none" stroke-width="1.3" /><rect x="1226" y="1066" width="6" height="5" fill="#aeb3ba" /><path d="M1251 1060 H1257 M1254 1057 V1063" stroke="#dfe2e6" fill="none" stroke-width="1.3" /><rect x="1257" y="1064" width="9" height="5" fill="#dfe2e6" /><path d="M1276 1056 V1071 H1291 M1279 1066 H1284 V1071" stroke="#dfe2e6" fill="none" stroke-width="1.4" /><circle cx="1305.5" cy="1064" r="6.5" fill="none" stroke="#dfe2e6" stroke-width="1.4"/><path d="M1300 1070 L1312 1056 M1305 1064 H1314" stroke="#dfe2e6" fill="none" stroke-width="1.3" /><polygon points="1323.5,1062 1330.5,1062 1327,1065.5" fill="#dfe2e6"/><path d="M1342 1056 L1354 1071" stroke="#e35a5a" fill="none" stroke-width="1.4" /><path d="M1347 1055 V1072" stroke="#5fd06a" fill="none" stroke-width="1.2" /><circle cx="1348" cy="1063.5" r="1.6" fill="#fff"/><polygon points="1363.5,1062 1370.5,1062 1367,1065.5" fill="#dfe2e6"/><path d="M1376 1071 H1392 M1376 1071 L1390 1058" stroke="#dfe2e6" fill="none" stroke-width="1.3" /><path d="M1384 1063 Q1387 1066 1386 1071" stroke="#dfe2e6" fill="none" stroke-width="1" /><rect x="1407" y="1056" width="14" height="15" fill="none" stroke="#f2f2f2" stroke-width="1.6"/><rect x="1405.5" y="1054.5" width="3.5" height="3.5" fill="#f2f2f2" /><polygon points="1429.5,1062 1436.5,1062 1433,1065.5" fill="#dfe2e6"/><rect x="1446" y="1057" width="16" height="2.2" fill="#dfe2e6" /><rect x="1446" y="1061.5" width="12" height="2.5" fill="#dfe2e6" /><rect x="1446" y="1066.5" width="16" height="3" fill="#dfe2e6" /><rect x="1446" y="1071" width="9" height="3" fill="#dfe2e6" /><rect x="1472" y="1056" width="16" height="16" fill="#ffffff" stroke="#111" stroke-width="1"/><rect x="1472" y="1056" width="4" height="4" fill="#222" /><rect x="1472" y="1064" width="4" height="4" fill="#222" /><rect x="1476" y="1060" width="4" height="4" fill="#222" /><rect x="1476" y="1068" width="4" height="4" fill="#222" /><rect x="1480" y="1056" width="4" height="4" fill="#222" /><rect x="1480" y="1064" width="4" height="4" fill="#222" /><rect x="1484" y="1060" width="4" height="4" fill="#222" /><rect x="1484" y="1068" width="4" height="4" fill="#222" /><rect x="1500" y="1061" width="12" height="12" fill="#f2f2f2" /><path d="M1497 1058 H1502 M1499.5 1055.5 V1060.5" stroke="#f2f2f2" fill="none" stroke-width="1.2" /><path d="M1522.5 1072 L1529 1055 L1535.5 1072 L1529 1068 Z" stroke="none" fill="#f2f2f2" stroke-width="1" /><circle cx="1536" cy="1057.5" r="2.5" fill="none" stroke="#f2f2f2" stroke-width="1.2"/><path d="M1547 1072 L1553.5 1055 L1560 1072 L1553.5 1068 Z" stroke="none" fill="#dfe2e6" stroke-width="1" /><path d="M1559 1055 L1562 1059 L1559.5 1059.5 L1562 1063" stroke="#dfe2e6" fill="none" stroke-width="1.1" /><path d="M1572 1072 L1578.5 1055 L1585 1072 L1578.5 1068 Z" stroke="none" fill="#dfe2e6" stroke-width="1" /><text x="1595.5" y="1069" font-family="Liberation Sans" font-size="13" fill="#dfe2e6" textLength="13" lengthAdjust="spacingAndGlyphs">1:1</text><polygon points="1612.5,1062 1619.5,1062 1616,1065.5" fill="#dfe2e6"/><circle cx="1640" cy="1063.5" r="5.5" fill="none" stroke="#dfe2e6" stroke-width="3.5" stroke-dasharray="2.2 1.4"/><circle cx="1640" cy="1063.5" r="3.5" fill="#dfe2e6"/><circle cx="1640" cy="1063.5" r="1.5" fill="#333a46"/><polygon points="1656.0,1062 1663.0,1062 1659.5,1065.5" fill="#dfe2e6"/><path d="M1681 1055 V1073 M1672 1064 H1690" stroke="#f2f2f2" fill="none" stroke-width="2" /><rect x="1701" y="1055" width="13" height="17" fill="none" stroke="#dfe2e6" stroke-width="1.2"/><rect x="1703.5" y="1058.5" width="2" height="2" fill="#dfe2e6" /><rect x="1707" y="1059.0" width="5" height="1.2" fill="#dfe2e6" /><rect x="1703.5" y="1063.0" width="2" height="2" fill="#dfe2e6" /><rect x="1707" y="1063.5" width="5" height="1.2" fill="#dfe2e6" /><rect x="1703.5" y="1067.5" width="2" height="2" fill="#dfe2e6" /><rect x="1707" y="1068.0" width="5" height="1.2" fill="#dfe2e6" /><rect x="1726" y="1056" width="17" height="14" fill="none" stroke="#dfe2e6" stroke-width="1.2"/><rect x="1726" y="1056" width="17" height="3" fill="#dfe2e6" /><rect x="1738" y="1066" width="7" height="6" fill="#dfe2e6" /><polygon points="1751.0,1062 1758.0,1062 1754.5,1065.5" fill="#dfe2e6"/><rect x="1768" y="1055" width="7" height="7" fill="none" stroke="#dfe2e6" stroke-width="1.1"/><circle cx="1781" cy="1063" r="3.5" fill="none" stroke="#dfe2e6" stroke-width="1.1"/><path d="M1772 1073 L1775.5 1066 L1779 1073 Z" stroke="#dfe2e6" fill="none" stroke-width="1.1" /><circle cx="1802.5" cy="1063.5" r="8" fill="#8e9db0" stroke="#b5bfcc" stroke-width="1.2"/><path d="M1799 1068 L1806 1059" stroke="#c8d0da" fill="none" stroke-width="1.2" /><rect x="1822" y="1061" width="7" height="6" fill="#f0b323" /><path d="M1824 1057 V1068 M1821 1057 H1831" stroke="#5a9be0" fill="none" stroke-width="1.3" /><path d="M1825 1060 H1833 L1836 1066 H1825Z" stroke="none" fill="#3a80d0" stroke-width="1" /><path d="M1829 1068 L1832.5 1071.5 L1839 1063" stroke="#5fc45f" fill="none" stroke-width="2" /><rect x="1843" y="1056" width="16" height="13" fill="#d9dadc" /><path d="M1844 1066 L1848 1060 L1852 1065 L1856 1059" stroke="#6a6f77" fill="none" stroke-width="1.1" /><path d="M1851 1073 L1855.5 1065 L1860 1073 Z" stroke="none" fill="#f2a05a" stroke-width="1" /><rect x="1876" y="1057" width="16" height="13" fill="none" stroke="#dfe2e6" stroke-width="1.2"/><path d="M1879 1067 L1884 1062 M1884 1062 V1065 M1884 1062 H1881 M1889 1060 L1885 1064" stroke="#dfe2e6" fill="none" stroke-width="1" /><rect x="1899" y="1056" width="16" height="2.5" fill="#dfe2e6" /><rect x="1899" y="1062.2" width="16" height="2.5" fill="#dfe2e6" /><rect x="1899" y="1068.5" width="16" height="2.5" fill="#dfe2e6" /></svg>
<div style="left:367.5px;top:1030.8px;font-family:'Liberation Mono';font-size:11.63px;line-height:14px;color:#111;white-space:pre">Specify one-pick point, select a previous segment or [<b style="font-weight:400;color:#2828c8">2P</b> <b style="font-weight:400;color:#2828c8">A</b>ngle <b style="font-weight:400;color:#2828c8">L</b>ength <b style="font-weight:400;color:#2828c8">ST</b>art <b style="font-weight:400;color:#2828c8">E</b>nd <b style="font-weight:400;color:#2828c8">SW</b>itch <b style="font-weight:400;color:#2828c8">T</b>rim e<b style="font-weight:400;color:#2828c8">X</b>tend <b style="font-weight:400;color:#2828c8">U</b>ndo]:</div>
<div style="left:300px;top:110px;width:90px;height:14.5px;overflow:hidden"><div style="position:absolute;left:21.8px;top:4.4px;font-family:'Liberation Sans';font-size:16.57px;line-height:16.57px;color:#e9ebef;white-space:pre;transform:scaleX(1.0);transform-origin:0 0">Query</div></div>
<div style="left:420px;top:110px;width:70px;height:14.5px;overflow:hidden"><div style="position:absolute;left:14.4px;top:4.4px;font-family:'Liberation Sans';font-size:16.57px;line-height:16.57px;color:#e9ebef;white-space:pre">Sheet</div></div>
<svg style="left:0;top:0" width="1920" height="340" viewBox="0 0 1920 340"><rect x="1298.75" y="124.9" width="119.5" height="202.1" fill="#4a5466" stroke="#5b6578" stroke-width="1"/><rect x="1300.7" y="128.75" width="115.7" height="37" fill="#2c323d" stroke="#1c2028" stroke-width="1" stroke-dasharray="1 1"/><rect x="1328.9" y="131" width="5" height="28" fill="#d03030" stroke="#b9bcc1" stroke-width="1.2"/><rect x="1329" y="130.5" width="4.5" height="3.5" fill="#fff"/><rect x="1304" y="157.3" width="26" height="4.5" fill="#d03030" stroke="#b9bcc1" stroke-width="1.2"/><rect x="1302.8" y="157.5" width="4" height="4" fill="#fff"/><rect x="1329" y="156.5" width="5.5" height="5.5" fill="#2c323d" stroke="#fff" stroke-width="1"/><path d="M1304.5 202 V186.5 H1314 M1321 186.5 H1331 V172" stroke="#b9bcc1" stroke-width="5" fill="none"/><path d="M1304.5 202 V186.5 H1314 M1321 186.5 H1331 V172" stroke="#d03030" stroke-width="2.2" fill="none"/><rect x="1329" y="170.5" width="4" height="4" fill="#fff"/><rect x="1303" y="199.5" width="4" height="4" fill="#fff"/><rect x="1315" y="184" width="5.5" height="5.5" fill="#4a5466" stroke="#fff" stroke-width="1"/><rect x="1304.5" y="219.5" width="26" height="26" fill="none" stroke="#b9bcc1" stroke-width="5"/><rect x="1304.5" y="219.5" width="26" height="26" fill="none" stroke="#d03030" stroke-width="2.2"/><rect x="1302.5" y="217.5" width="4" height="4" fill="#fff"/><rect x="1328.5" y="217.5" width="4" height="4" fill="#fff"/><rect x="1302.5" y="243.5" width="4" height="4" fill="#fff"/><rect x="1329" y="241.5" width="5.5" height="5.5" fill="#4a5466" stroke="#fff" stroke-width="1"/><circle cx="1319.2" cy="266.8" r="13.5" fill="none" stroke="#b9bcc1" stroke-width="5"/><circle cx="1319.2" cy="266.8" r="13.5" fill="none" stroke="#d03030" stroke-width="2.2"/><rect x="1324.5" y="254" width="4" height="4" fill="#fff"/><rect x="1305.5" y="272" width="5.5" height="5.5" fill="#4a5466" stroke="#fff" stroke-width="1"/><path d="M1305 295 Q1328 299 1332.5 319" stroke="#b9bcc1" stroke-width="5" fill="none"/><path d="M1305 295 Q1328 299 1332.5 319" stroke="#d03030" stroke-width="2.2" fill="none"/><rect x="1303" y="293" width="4" height="4" fill="#fff"/><rect x="1330.5" y="317.5" width="4" height="4" fill="#fff"/><rect x="1320" y="300" width="5.5" height="5.5" fill="#4a5466" stroke="#fff" stroke-width="1"/><path d="M1396.5 152 V161 L1398.5 159 L1400 162 L1401 161.5 L1399.7 158.5 H1402.5 Z" fill="#fff" stroke="#222" stroke-width="0.6"/></svg>
<div style="left:567px;top:4.30px;font-family:'Liberation Sans';font-size:16.42px;line-height:16.42px;font-weight:700;color:#ffffff;white-space:pre;transform:scaleX(1.0414);transform-origin:0 0;">Autodesk AutoCAD 2023 - NOT FOR RESALE    Vectorization Tools.dwg</div>
<div style="left:327px;top:5.35px;font-family:'Liberation Sans';font-size:16.72px;line-height:16.72px;font-weight:400;color:#8fd1f7;white-space:pre;transform:scaleX(0.9197);transform-origin:0 0;">Share</div>
<div style="left:1360px;top:6.43px;font-family:'Liberation Sans';font-size:13.08px;line-height:13.08px;font-weight:400;font-style:italic;color:#8a93a0;white-space:pre;transform:scaleX(0.8986);transform-origin:0 0;">Type a keyword or phrase</div>
<div style="left:1584px;top:5.35px;font-family:'Liberation Sans';font-size:16.72px;line-height:16.72px;font-weight:400;color:#e8eaee;white-space:pre;transform:scaleX(0.9420);transform-origin:0 0;">Sign In</div>
<div style="left:13.5px;top:31.65px;font-family:'Liberation Sans';font-size:16.72px;line-height:16.72px;font-weight:400;color:#c5cad2;white-space:pre;transform:scaleX(0.9762);transform-origin:0 0;">Home</div>
<div style="left:77px;top:31.65px;font-family:'Liberation Sans';font-size:16.72px;line-height:16.72px;font-weight:400;color:#c5cad2;white-space:pre;transform:scaleX(1.0052);transform-origin:0 0;">Insert</div>
<div style="left:139px;top:31.65px;font-family:'Liberation Sans';font-size:16.72px;line-height:16.72px;font-weight:400;color:#c5cad2;white-space:pre;transform:scaleX(1.0168);transform-origin:0 0;">Annotate</div>
<div style="left:227px;top:31.65px;font-family:'Liberation Sans';font-size:16.72px;line-height:16.72px;font-weight:400;color:#c5cad2;white-space:pre;transform:scaleX(0.9748);transform-origin:0 0;">View</div>
<div style="left:282px;top:31.65px;font-family:'Liberation Sans';font-size:16.72px;line-height:16.72px;font-weight:400;color:#c5cad2;white-space:pre;transform:scaleX(0.9607);transform-origin:0 0;">Manage</div>
<div style="left:361px;top:31.65px;font-family:'Liberation Sans';font-size:16.72px;line-height:16.72px;font-weight:400;color:#c5cad2;white-space:pre;transform:scaleX(1.0368);transform-origin:0 0;">Output</div>
<div style="left:433px;top:31.65px;font-family:'Liberation Sans';font-size:16.72px;line-height:16.72px;font-weight:400;color:#c5cad2;white-space:pre;transform:scaleX(1.0063);transform-origin:0 0;">Add-ins</div>
<div style="left:510px;top:31.65px;font-family:'Liberation Sans';font-size:16.72px;line-height:16.72px;font-weight:400;color:#c5cad2;white-space:pre;transform:scaleX(0.9949);transform-origin:0 0;">Collaborate</div>
<div style="left:615.7px;top:31.65px;font-family:'Liberation Sans';font-size:16.72px;line-height:16.72px;font-weight:400;color:#c5cad2;white-space:pre;transform:scaleX(0.9482);transform-origin:0 0;">Express Tools</div>
<div style="left:734px;top:31.65px;font-family:'Liberation Sans';font-size:16.72px;line-height:16.72px;font-weight:400;color:#c5cad2;white-space:pre;transform:scaleX(0.9848);transform-origin:0 0;">Featured Apps</div>
<div style="left:861px;top:31.65px;font-family:'Liberation Sans';font-size:16.72px;line-height:16.72px;font-weight:400;color:#eef0f3;white-space:pre;transform:scaleX(0.9672);transform-origin:0 0;">Raster Tools</div>
<div style="left:7px;top:95.37px;font-family:'Liberation Sans';font-size:16.57px;line-height:16.57px;font-weight:400;color:#e9ebef;white-space:pre;transform:scaleX(0.9487);transform-origin:0 0;">Insert...</div>
<div style="left:66px;top:95.37px;font-family:'Liberation Sans';font-size:16.57px;line-height:16.57px;font-weight:400;color:#e9ebef;white-space:pre;transform:scaleX(0.9003);transform-origin:0 0;">Save</div>
<div style="left:327.7px;top:95.37px;font-family:'Liberation Sans';font-size:16.57px;line-height:16.57px;font-weight:400;color:#e9ebef;white-space:pre;transform:scaleX(0.9057);transform-origin:0 0;">Data</div>
<div style="left:376px;top:95.37px;font-family:'Liberation Sans';font-size:16.57px;line-height:16.57px;font-weight:400;color:#e9ebef;white-space:pre;transform:scaleX(1.0197);transform-origin:0 0;">Match</div>
<div style="left:428.5px;top:95.37px;font-family:'Liberation Sans';font-size:16.57px;line-height:16.57px;font-weight:400;color:#e9ebef;white-space:pre;transform:scaleX(0.9811);transform-origin:0 0;">Rubber</div>
<div style="left:518.75px;top:95.37px;font-family:'Liberation Sans';font-size:16.57px;line-height:16.57px;font-weight:400;color:#e9ebef;white-space:pre;transform:scaleX(0.9940);transform-origin:0 0;">Touchup</div>
<div style="left:596px;top:95.37px;font-family:'Liberation Sans';font-size:16.57px;line-height:16.57px;font-weight:400;color:#e9ebef;white-space:pre;transform:scaleX(0.9562);transform-origin:0 0;">Cleanup</div>
<div style="left:677px;top:95.37px;font-family:'Liberation Sans';font-size:16.57px;line-height:16.57px;font-weight:400;color:#e9ebef;white-space:pre;transform:scaleX(0.9645);transform-origin:0 0;">Remove</div>
<div style="left:759px;top:95.37px;font-family:'Liberation Sans';font-size:16.57px;line-height:16.57px;font-weight:400;color:#e9ebef;white-space:pre;">Crop</div>
<div style="left:817.7px;top:87.97px;font-family:'Liberation Sans';font-size:16.57px;line-height:16.57px;font-weight:400;color:#e9ebef;white-space:pre;transform:scaleX(0.9241);transform-origin:0 0;">Process</div>
<div style="left:823px;top:107.57px;font-family:'Liberation Sans';font-size:16.57px;line-height:16.57px;font-weight:400;color:#e9ebef;white-space:pre;transform:scaleX(0.9707);transform-origin:0 0;">Image</div>
<div style="left:902px;top:87.77px;font-family:'Liberation Sans';font-size:16.57px;line-height:16.57px;font-weight:400;color:#e9ebef;white-space:pre;transform:scaleX(0.9654);transform-origin:0 0;">Create</div>
<div style="left:900px;top:107.57px;font-family:'Liberation Sans';font-size:16.57px;line-height:16.57px;font-weight:400;color:#e9ebef;white-space:pre;transform:scaleX(0.9848);transform-origin:0 0;">Region</div>
<div style="left:974px;top:87.77px;font-family:'Liberation Sans';font-size:16.57px;line-height:16.57px;font-weight:400;color:#e9ebef;white-space:pre;transform:scaleX(0.9382);transform-origin:0 0;">Enhanced</div>
<div style="left:983.6px;top:107.57px;font-family:'Liberation Sans';font-size:16.57px;line-height:16.57px;font-weight:400;color:#e9ebef;white-space:pre;transform:scaleX(0.9790);transform-origin:0 0;">Region</div>
<div style="left:1074px;top:87.77px;font-family:'Liberation Sans';font-size:16.57px;line-height:16.57px;font-weight:400;color:#e9ebef;white-space:pre;transform:scaleX(0.9594);transform-origin:0 0;">Create</div>
<div style="left:1066px;top:107.57px;font-family:'Liberation Sans';font-size:16.57px;line-height:16.57px;font-weight:400;color:#e9ebef;white-space:pre;transform:scaleX(1.0031);transform-origin:0 0;">Primitive</div>
<div style="left:1217.5px;top:94.67px;font-family:'Liberation Sans';font-size:16.57px;line-height:16.57px;font-weight:400;color:#e9ebef;white-space:pre;transform:scaleX(0.9764);transform-origin:0 0;">Followers</div>
<div style="left:1309px;top:94.67px;font-family:'Liberation Sans';font-size:16.57px;line-height:16.57px;font-weight:400;color:#e9ebef;white-space:pre;transform:scaleX(0.9891);transform-origin:0 0;">Primitives</div>
<div style="left:1401.7px;top:94.67px;font-family:'Liberation Sans';font-size:16.57px;line-height:16.57px;font-weight:400;color:#e9ebef;white-space:pre;transform:scaleX(1.0634);transform-origin:0 0;">Text</div>
<div style="left:1456px;top:94.67px;font-family:'Liberation Sans';font-size:16.57px;line-height:16.57px;font-weight:400;color:#e9ebef;white-space:pre;transform:scaleX(0.8693);transform-origin:0 0;">OCR</div>
<div style="left:1529.75px;top:59.59px;font-family:'Liberation Sans';font-size:15.55px;line-height:15.55px;font-weight:400;color:#e9ebef;white-space:pre;transform:scaleX(0.9795);transform-origin:0 0;">Raster Snap</div>
<div style="left:162.4px;top:58.54px;font-family:'Liberation Sans';font-size:15.55px;line-height:15.55px;font-weight:400;color:#e9ebef;white-space:pre;transform:scaleX(1.0248);transform-origin:0 0;">Floorplan  06</div>
<div style="left:20.8px;top:133.46px;font-family:'Liberation Sans';font-size:15.99px;line-height:15.99px;font-weight:400;color:#d9dce1;white-space:pre;transform:scaleX(1.0567);transform-origin:0 0;">Insert &amp; Write</div>
<div style="left:198px;top:133.46px;font-family:'Liberation Sans';font-size:15.99px;line-height:15.99px;font-weight:400;color:#d9dce1;white-space:pre;transform:scaleX(1.0379);transform-origin:0 0;">Manage &amp; View</div>
<div style="left:407.4px;top:133.46px;font-family:'Liberation Sans';font-size:15.99px;line-height:15.99px;font-weight:400;color:#d9dce1;white-space:pre;transform:scaleX(1.0312);transform-origin:0 0;">Correlate</div>
<div style="left:678px;top:133.46px;font-family:'Liberation Sans';font-size:15.99px;line-height:15.99px;font-weight:400;color:#d9dce1;white-space:pre;transform:scaleX(1.0164);transform-origin:0 0;">Edit</div>
<div style="left:1016px;top:132.86px;font-family:'Liberation Sans';font-size:15.99px;line-height:15.99px;font-weight:400;color:#d9dce1;white-space:pre;transform:scaleX(0.9006);transform-origin:0 0;">REM</div>
<div style="left:1239px;top:133.46px;font-family:'Liberation Sans';font-size:15.99px;line-height:15.99px;font-weight:400;color:#d9dce1;white-space:pre;transform:scaleX(1.0376);transform-origin:0 0;">Vectoriz</div>
<div style="left:1418px;top:133.46px;font-family:'Liberation Sans';font-size:15.99px;line-height:15.99px;font-weight:400;color:#d9dce1;white-space:pre;transform:scaleX(1.0784);transform-origin:0 0;">ext</div>
<div style="left:1568px;top:133.46px;font-family:'Liberation Sans';font-size:15.99px;line-height:15.99px;font-weight:400;color:#d9dce1;white-space:pre;transform:scaleX(0.9238);transform-origin:0 0;">Snap</div>
<div style="left:25.7px;top:156.39px;font-family:'Liberation Sans';font-size:15.84px;line-height:15.84px;font-weight:400;color:#d9dce1;white-space:pre;transform:scaleX(1.0079);transform-origin:0 0;">Start</div>
<div style="left:84px;top:156.39px;font-family:'Liberation Sans';font-size:15.84px;line-height:15.84px;font-weight:700;color:#ffffff;white-space:pre;transform:scaleX(1.0099);transform-origin:0 0;">Vectorization Tools*</div>
<div style="left:553.5px;top:577.93px;font-family:'Liberation Sans';font-size:13.08px;line-height:13.08px;font-weight:700;color:#ffffff;white-space:pre;transform:scaleX(0.9280);transform-origin:0 0;">Faculty</div>
<div style="left:702.1px;top:682.75px;font-family:'Liberation Sans';font-size:14.24px;line-height:14.24px;font-weight:700;color:#ffffff;white-space:pre;transform:scaleX(0.8672);transform-origin:0 0;">Multi-Purpose Room</div>
<div style="left:826.7px;top:554.08px;font-family:'Liberation Sans';font-size:15.26px;line-height:15.26px;font-weight:700;color:#ffffff;white-space:pre;transform:scaleX(0.8052);transform-origin:0 0;">Stor.</div>
<div style="left:1122px;top:554.58px;font-family:'Liberation Sans';font-size:15.26px;line-height:15.26px;font-weight:700;color:#ffffff;white-space:pre;transform:scaleX(0.8258);transform-origin:0 0;">Stor.</div>
<div style="left:970px;top:584.70px;font-family:'Liberation Sans';font-size:14.53px;line-height:14.53px;font-weight:700;color:#ffffff;white-space:pre;transform:scaleX(0.7900);transform-origin:0 0;">Boiler</div>
<div style="left:1046.7px;top:585.70px;font-family:'Liberation Sans';font-size:14.53px;line-height:14.53px;font-weight:700;color:#ffffff;white-space:pre;transform:scaleX(0.8265);transform-origin:0 0;">Cust.</div>
<div style="left:756px;top:871.31px;font-family:'Liberation Sans';font-size:13.81px;line-height:13.81px;font-weight:700;color:#ffffff;white-space:pre;transform:scaleX(0.9314);transform-origin:0 0;">Stage</div>
<div style="left:293.3px;top:980.71px;font-family:'Liberation Mono';font-size:11.8px;line-height:11.8px;font-weight:400;color:#111111;white-space:pre;">Command:</div>
<div style="left:293.3px;top:995.71px;font-family:'Liberation Mono';font-size:11.8px;line-height:11.8px;font-weight:400;color:#111111;white-space:pre;">Specify one-pick point or [2P]:</div>
<div style="left:293.3px;top:1010.46px;font-family:'Liberation Mono';font-size:11.8px;line-height:11.8px;font-weight:400;color:#111111;white-space:pre;">Length = 28.2 Angle = 179.02</div>
<div style="left:326.5px;top:1031.56px;font-family:'Liberation Mono';font-size:11.8px;line-height:11.8px;font-weight:700;color:#111111;white-space:pre;">VLINE</div>
<div style="left:987.8px;top:1057.20px;font-family:'Liberation Sans';font-size:14.53px;line-height:14.53px;font-weight:400;color:#e6e8ec;white-space:pre;transform:scaleX(0.8199);transform-origin:0 0;">253.19, 248.36, 0.00</div>
<div style="left:1108.9px;top:1057.20px;font-family:'Liberation Sans';font-size:14.53px;line-height:14.53px;font-weight:400;color:#e6e8ec;white-space:pre;transform:scaleX(0.7574);transform-origin:0 0;">MODEL</div>
<div style="left:4px;top:187.31px;font-family:'Liberation Sans';font-size:13.81px;line-height:13.81px;font-weight:400;color:#c8ccd2;white-space:pre;transform:scaleX(0.8887);transform-origin:0 0;">[−][Top][2D Wireframe]</div>
<div style="left:25.6px;top:1055.24px;font-family:'Liberation Sans';font-size:17.44px;line-height:17.44px;font-weight:700;color:#ffffff;white-space:pre;transform:scaleX(0.9310);transform-origin:0 0;">Model</div>
<div style="left:97.5px;top:1055.24px;font-family:'Liberation Sans';font-size:17.44px;line-height:17.44px;font-weight:400;color:#e2e5e9;white-space:pre;transform:scaleX(0.8862);transform-origin:0 0;">Layout1</div>
<div style="left:1529px;top:107.49px;font-family:'Liberation Sans';font-size:15.84px;line-height:15.84px;font-weight:400;color:#eef0f3;white-space:pre;transform:scaleX(1.0298);transform-origin:0 0;">Shift+Left Click Select</div>
<div style="left:1338.6px;top:139.60px;font-family:'Liberation Sans';font-size:17.01px;line-height:17.01px;font-weight:400;color:#eef0f3;white-space:pre;transform:scaleX(0.9085);transform-origin:0 0;">Line</div>
<div style="left:1338.6px;top:179.50px;font-family:'Liberation Sans';font-size:17.01px;line-height:17.01px;font-weight:400;color:#eef0f3;white-space:pre;transform:scaleX(0.9472);transform-origin:0 0;">Polyline</div>
<div style="left:1338.6px;top:219.40px;font-family:'Liberation Sans';font-size:17.01px;line-height:17.01px;font-weight:400;color:#eef0f3;white-space:pre;transform:scaleX(0.9404);transform-origin:0 0;">Rectangle</div>
<div style="left:1338.6px;top:259.20px;font-family:'Liberation Sans';font-size:17.01px;line-height:17.01px;font-weight:400;color:#eef0f3;white-space:pre;transform:scaleX(0.9182);transform-origin:0 0;">Circle</div>
<div style="left:1338.6px;top:299.10px;font-family:'Liberation Sans';font-size:17.01px;line-height:17.01px;font-weight:400;color:#eef0f3;white-space:pre;transform:scaleX(0.9529);transform-origin:0 0;">Arc</div>
</body></html>
